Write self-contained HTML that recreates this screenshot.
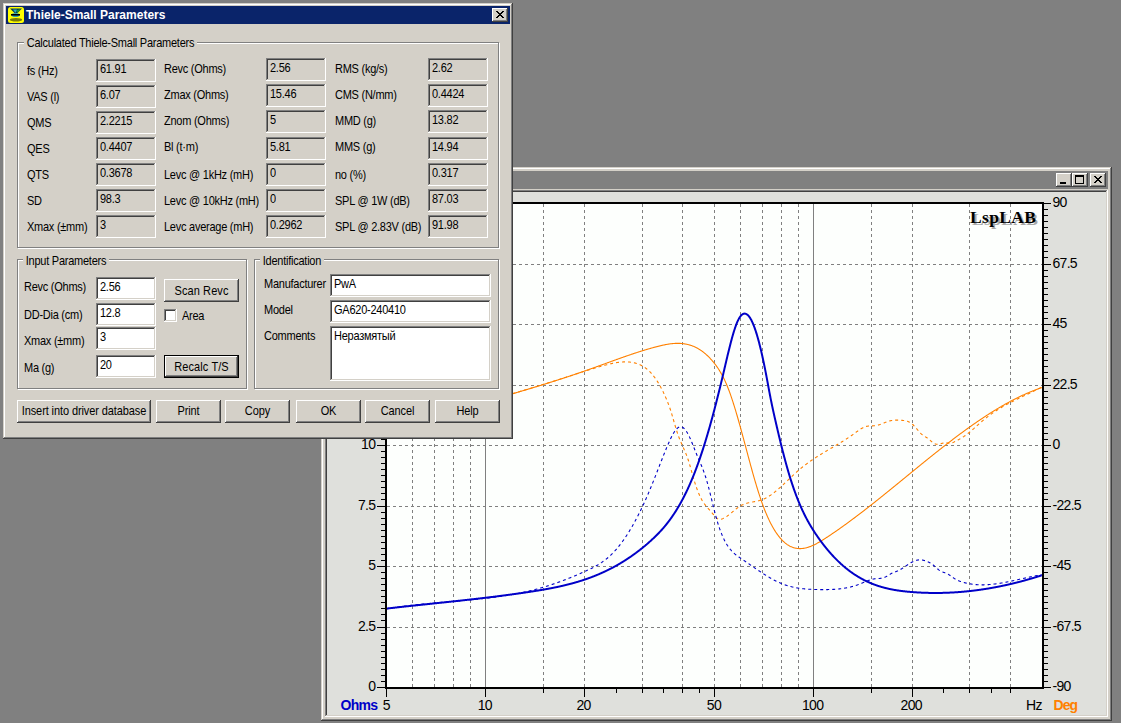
<!DOCTYPE html>
<html><head><meta charset="utf-8"><style>
html,body{margin:0;padding:0}
body{width:1121px;height:723px;position:relative;overflow:hidden;background:#808080;font-family:"Liberation Sans",sans-serif;font-size:11px}
.t{position:absolute;white-space:nowrap;font-size:11px;line-height:13px;color:#000;letter-spacing:-0.25px;transform:scaleY(1.12);transform-origin:0 0}
</style></head><body>
<svg width="1121" height="723" style="position:absolute;left:0;top:0" shape-rendering="crispEdges"><rect x="321" y="167" width="791" height="554" fill="#d4d0c8"/><rect x="321" y="167" width="790" height="1" fill="#d4d0c8"/><rect x="321" y="167" width="1" height="553" fill="#d4d0c8"/><rect x="322" y="168" width="788" height="1" fill="#ffffff"/><rect x="322" y="168" width="1" height="551" fill="#ffffff"/><rect x="321" y="720" width="791" height="1" fill="#404040"/><rect x="1111" y="167" width="1" height="554" fill="#404040"/><rect x="322" y="719" width="789" height="1" fill="#808080"/><rect x="1110" y="168" width="1" height="552" fill="#808080"/><rect x="325" y="171" width="783" height="18" fill="#808080"/><rect x="1056" y="173" width="16" height="14" fill="#d4d0c8"/><rect x="1056" y="173" width="15" height="1" fill="#ffffff"/><rect x="1056" y="173" width="1" height="13" fill="#ffffff"/><rect x="1057" y="174" width="13" height="1" fill="#d4d0c8"/><rect x="1057" y="174" width="1" height="11" fill="#d4d0c8"/><rect x="1056" y="186" width="16" height="1" fill="#404040"/><rect x="1071" y="173" width="1" height="14" fill="#404040"/><rect x="1057" y="185" width="14" height="1" fill="#808080"/><rect x="1070" y="174" width="1" height="12" fill="#808080"/><rect x="1072" y="173" width="16" height="14" fill="#d4d0c8"/><rect x="1072" y="173" width="15" height="1" fill="#ffffff"/><rect x="1072" y="173" width="1" height="13" fill="#ffffff"/><rect x="1073" y="174" width="13" height="1" fill="#d4d0c8"/><rect x="1073" y="174" width="1" height="11" fill="#d4d0c8"/><rect x="1072" y="186" width="16" height="1" fill="#404040"/><rect x="1087" y="173" width="1" height="14" fill="#404040"/><rect x="1073" y="185" width="14" height="1" fill="#808080"/><rect x="1086" y="174" width="1" height="12" fill="#808080"/><rect x="1090" y="173" width="16" height="14" fill="#d4d0c8"/><rect x="1090" y="173" width="15" height="1" fill="#ffffff"/><rect x="1090" y="173" width="1" height="13" fill="#ffffff"/><rect x="1091" y="174" width="13" height="1" fill="#d4d0c8"/><rect x="1091" y="174" width="1" height="11" fill="#d4d0c8"/><rect x="1090" y="186" width="16" height="1" fill="#404040"/><rect x="1105" y="173" width="1" height="14" fill="#404040"/><rect x="1091" y="185" width="14" height="1" fill="#808080"/><rect x="1104" y="174" width="1" height="12" fill="#808080"/><rect x="1060" y="182" width="6" height="2" fill="#000"/><rect x="1075" y="175" width="9" height="2" fill="#000"/><rect x="1075" y="175" width="1" height="9" fill="#000"/><rect x="1083" y="175" width="1" height="9" fill="#000"/><rect x="1075" y="183" width="9" height="1" fill="#000"/><rect x="1094" y="176" width="1" height="1" fill="#000"/><rect x="1095" y="176" width="1" height="1" fill="#000"/><rect x="1100" y="176" width="1" height="1" fill="#000"/><rect x="1101" y="176" width="1" height="1" fill="#000"/><rect x="1095" y="177" width="1" height="1" fill="#000"/><rect x="1096" y="177" width="1" height="1" fill="#000"/><rect x="1099" y="177" width="1" height="1" fill="#000"/><rect x="1100" y="177" width="1" height="1" fill="#000"/><rect x="1096" y="178" width="1" height="1" fill="#000"/><rect x="1097" y="178" width="1" height="1" fill="#000"/><rect x="1098" y="178" width="1" height="1" fill="#000"/><rect x="1099" y="178" width="1" height="1" fill="#000"/><rect x="1097" y="179" width="1" height="1" fill="#000"/><rect x="1098" y="179" width="1" height="1" fill="#000"/><rect x="1096" y="180" width="1" height="1" fill="#000"/><rect x="1097" y="180" width="1" height="1" fill="#000"/><rect x="1098" y="180" width="1" height="1" fill="#000"/><rect x="1099" y="180" width="1" height="1" fill="#000"/><rect x="1095" y="181" width="1" height="1" fill="#000"/><rect x="1096" y="181" width="1" height="1" fill="#000"/><rect x="1099" y="181" width="1" height="1" fill="#000"/><rect x="1100" y="181" width="1" height="1" fill="#000"/><rect x="1094" y="182" width="1" height="1" fill="#000"/><rect x="1095" y="182" width="1" height="1" fill="#000"/><rect x="1100" y="182" width="1" height="1" fill="#000"/><rect x="1101" y="182" width="1" height="1" fill="#000"/><rect x="325" y="190" width="782" height="1" fill="#808080"/><rect x="325" y="190" width="1" height="526" fill="#808080"/><rect x="326" y="191" width="780" height="1" fill="#404040"/><rect x="326" y="191" width="1" height="524" fill="#404040"/><rect x="325" y="716" width="783" height="1" fill="#ffffff"/><rect x="1107" y="190" width="1" height="527" fill="#ffffff"/><rect x="326" y="715" width="781" height="1" fill="#d4d0c8"/><rect x="1106" y="191" width="1" height="525" fill="#d4d0c8"/><rect x="327" y="192" width="779" height="523" fill="#dfe0dc"/><rect x="385" y="202" width="659" height="487" fill="#000"/><rect x="387" y="204" width="655" height="483" fill="#fdfffd"/><g stroke="#808080" stroke-width="1" stroke-dasharray="3 3" shape-rendering="crispEdges"><line x1="387" y1="627.5" x2="1042" y2="627.5"/><line x1="387" y1="566.5" x2="1042" y2="566.5"/><line x1="387" y1="506.5" x2="1042" y2="506.5"/><line x1="387" y1="445.5" x2="1042" y2="445.5"/><line x1="387" y1="385.5" x2="1042" y2="385.5"/><line x1="387" y1="324.5" x2="1042" y2="324.5"/><line x1="387" y1="264.5" x2="1042" y2="264.5"/><line x1="412.5" y1="204" x2="412.5" y2="687"/><line x1="434.5" y1="204" x2="434.5" y2="687"/><line x1="453.5" y1="204" x2="453.5" y2="687"/><line x1="470.5" y1="204" x2="470.5" y2="687"/><line x1="543.5" y1="204" x2="543.5" y2="687"/><line x1="584.5" y1="204" x2="584.5" y2="687"/><line x1="642.5" y1="204" x2="642.5" y2="687"/><line x1="682.5" y1="204" x2="682.5" y2="687"/><line x1="714.5" y1="204" x2="714.5" y2="687"/><line x1="740.5" y1="204" x2="740.5" y2="687"/><line x1="762.5" y1="204" x2="762.5" y2="687"/><line x1="781.5" y1="204" x2="781.5" y2="687"/><line x1="798.5" y1="204" x2="798.5" y2="687"/><line x1="871.5" y1="204" x2="871.5" y2="687"/><line x1="912.5" y1="204" x2="912.5" y2="687"/><line x1="969.5" y1="204" x2="969.5" y2="687"/><line x1="1010.5" y1="204" x2="1010.5" y2="687"/></g><rect x="485" y="204" width="1" height="483" fill="#808080"/><rect x="813" y="204" width="1" height="483" fill="#808080"/><rect x="377" y="687" width="8" height="1" fill="#000"/><rect x="1044" y="687" width="7" height="1" fill="#000"/><rect x="381" y="681" width="4" height="1" fill="#000"/><rect x="1044" y="681" width="4" height="1" fill="#000"/><rect x="381" y="675" width="4" height="1" fill="#000"/><rect x="1044" y="675" width="4" height="1" fill="#000"/><rect x="381" y="669" width="4" height="1" fill="#000"/><rect x="1044" y="669" width="4" height="1" fill="#000"/><rect x="381" y="663" width="4" height="1" fill="#000"/><rect x="1044" y="663" width="4" height="1" fill="#000"/><rect x="381" y="657" width="4" height="1" fill="#000"/><rect x="1044" y="657" width="4" height="1" fill="#000"/><rect x="381" y="651" width="4" height="1" fill="#000"/><rect x="1044" y="651" width="4" height="1" fill="#000"/><rect x="381" y="645" width="4" height="1" fill="#000"/><rect x="1044" y="645" width="4" height="1" fill="#000"/><rect x="381" y="639" width="4" height="1" fill="#000"/><rect x="1044" y="639" width="4" height="1" fill="#000"/><rect x="381" y="633" width="4" height="1" fill="#000"/><rect x="1044" y="633" width="4" height="1" fill="#000"/><rect x="377" y="627" width="8" height="1" fill="#000"/><rect x="1044" y="627" width="7" height="1" fill="#000"/><rect x="381" y="620" width="4" height="1" fill="#000"/><rect x="1044" y="620" width="4" height="1" fill="#000"/><rect x="381" y="614" width="4" height="1" fill="#000"/><rect x="1044" y="614" width="4" height="1" fill="#000"/><rect x="381" y="608" width="4" height="1" fill="#000"/><rect x="1044" y="608" width="4" height="1" fill="#000"/><rect x="381" y="602" width="4" height="1" fill="#000"/><rect x="1044" y="602" width="4" height="1" fill="#000"/><rect x="381" y="596" width="4" height="1" fill="#000"/><rect x="1044" y="596" width="4" height="1" fill="#000"/><rect x="381" y="590" width="4" height="1" fill="#000"/><rect x="1044" y="590" width="4" height="1" fill="#000"/><rect x="381" y="584" width="4" height="1" fill="#000"/><rect x="1044" y="584" width="4" height="1" fill="#000"/><rect x="381" y="578" width="4" height="1" fill="#000"/><rect x="1044" y="578" width="4" height="1" fill="#000"/><rect x="381" y="572" width="4" height="1" fill="#000"/><rect x="1044" y="572" width="4" height="1" fill="#000"/><rect x="377" y="566" width="8" height="1" fill="#000"/><rect x="1044" y="566" width="7" height="1" fill="#000"/><rect x="381" y="560" width="4" height="1" fill="#000"/><rect x="1044" y="560" width="4" height="1" fill="#000"/><rect x="381" y="554" width="4" height="1" fill="#000"/><rect x="1044" y="554" width="4" height="1" fill="#000"/><rect x="381" y="548" width="4" height="1" fill="#000"/><rect x="1044" y="548" width="4" height="1" fill="#000"/><rect x="381" y="542" width="4" height="1" fill="#000"/><rect x="1044" y="542" width="4" height="1" fill="#000"/><rect x="381" y="536" width="4" height="1" fill="#000"/><rect x="1044" y="536" width="4" height="1" fill="#000"/><rect x="381" y="530" width="4" height="1" fill="#000"/><rect x="1044" y="530" width="4" height="1" fill="#000"/><rect x="381" y="524" width="4" height="1" fill="#000"/><rect x="1044" y="524" width="4" height="1" fill="#000"/><rect x="381" y="518" width="4" height="1" fill="#000"/><rect x="1044" y="518" width="4" height="1" fill="#000"/><rect x="381" y="512" width="4" height="1" fill="#000"/><rect x="1044" y="512" width="4" height="1" fill="#000"/><rect x="377" y="506" width="8" height="1" fill="#000"/><rect x="1044" y="506" width="7" height="1" fill="#000"/><rect x="381" y="499" width="4" height="1" fill="#000"/><rect x="1044" y="499" width="4" height="1" fill="#000"/><rect x="381" y="493" width="4" height="1" fill="#000"/><rect x="1044" y="493" width="4" height="1" fill="#000"/><rect x="381" y="487" width="4" height="1" fill="#000"/><rect x="1044" y="487" width="4" height="1" fill="#000"/><rect x="381" y="481" width="4" height="1" fill="#000"/><rect x="1044" y="481" width="4" height="1" fill="#000"/><rect x="381" y="475" width="4" height="1" fill="#000"/><rect x="1044" y="475" width="4" height="1" fill="#000"/><rect x="381" y="469" width="4" height="1" fill="#000"/><rect x="1044" y="469" width="4" height="1" fill="#000"/><rect x="381" y="463" width="4" height="1" fill="#000"/><rect x="1044" y="463" width="4" height="1" fill="#000"/><rect x="381" y="457" width="4" height="1" fill="#000"/><rect x="1044" y="457" width="4" height="1" fill="#000"/><rect x="381" y="451" width="4" height="1" fill="#000"/><rect x="1044" y="451" width="4" height="1" fill="#000"/><rect x="377" y="445" width="8" height="1" fill="#000"/><rect x="1044" y="445" width="7" height="1" fill="#000"/><rect x="381" y="439" width="4" height="1" fill="#000"/><rect x="1044" y="439" width="4" height="1" fill="#000"/><rect x="381" y="433" width="4" height="1" fill="#000"/><rect x="1044" y="433" width="4" height="1" fill="#000"/><rect x="381" y="427" width="4" height="1" fill="#000"/><rect x="1044" y="427" width="4" height="1" fill="#000"/><rect x="381" y="421" width="4" height="1" fill="#000"/><rect x="1044" y="421" width="4" height="1" fill="#000"/><rect x="381" y="415" width="4" height="1" fill="#000"/><rect x="1044" y="415" width="4" height="1" fill="#000"/><rect x="381" y="409" width="4" height="1" fill="#000"/><rect x="1044" y="409" width="4" height="1" fill="#000"/><rect x="381" y="403" width="4" height="1" fill="#000"/><rect x="1044" y="403" width="4" height="1" fill="#000"/><rect x="381" y="397" width="4" height="1" fill="#000"/><rect x="1044" y="397" width="4" height="1" fill="#000"/><rect x="381" y="391" width="4" height="1" fill="#000"/><rect x="1044" y="391" width="4" height="1" fill="#000"/><rect x="377" y="385" width="8" height="1" fill="#000"/><rect x="1044" y="385" width="7" height="1" fill="#000"/><rect x="381" y="378" width="4" height="1" fill="#000"/><rect x="1044" y="378" width="4" height="1" fill="#000"/><rect x="381" y="372" width="4" height="1" fill="#000"/><rect x="1044" y="372" width="4" height="1" fill="#000"/><rect x="381" y="366" width="4" height="1" fill="#000"/><rect x="1044" y="366" width="4" height="1" fill="#000"/><rect x="381" y="360" width="4" height="1" fill="#000"/><rect x="1044" y="360" width="4" height="1" fill="#000"/><rect x="381" y="354" width="4" height="1" fill="#000"/><rect x="1044" y="354" width="4" height="1" fill="#000"/><rect x="381" y="348" width="4" height="1" fill="#000"/><rect x="1044" y="348" width="4" height="1" fill="#000"/><rect x="381" y="342" width="4" height="1" fill="#000"/><rect x="1044" y="342" width="4" height="1" fill="#000"/><rect x="381" y="336" width="4" height="1" fill="#000"/><rect x="1044" y="336" width="4" height="1" fill="#000"/><rect x="381" y="330" width="4" height="1" fill="#000"/><rect x="1044" y="330" width="4" height="1" fill="#000"/><rect x="377" y="324" width="8" height="1" fill="#000"/><rect x="1044" y="324" width="7" height="1" fill="#000"/><rect x="381" y="318" width="4" height="1" fill="#000"/><rect x="1044" y="318" width="4" height="1" fill="#000"/><rect x="381" y="312" width="4" height="1" fill="#000"/><rect x="1044" y="312" width="4" height="1" fill="#000"/><rect x="381" y="306" width="4" height="1" fill="#000"/><rect x="1044" y="306" width="4" height="1" fill="#000"/><rect x="381" y="300" width="4" height="1" fill="#000"/><rect x="1044" y="300" width="4" height="1" fill="#000"/><rect x="381" y="294" width="4" height="1" fill="#000"/><rect x="1044" y="294" width="4" height="1" fill="#000"/><rect x="381" y="288" width="4" height="1" fill="#000"/><rect x="1044" y="288" width="4" height="1" fill="#000"/><rect x="381" y="282" width="4" height="1" fill="#000"/><rect x="1044" y="282" width="4" height="1" fill="#000"/><rect x="381" y="276" width="4" height="1" fill="#000"/><rect x="1044" y="276" width="4" height="1" fill="#000"/><rect x="381" y="270" width="4" height="1" fill="#000"/><rect x="1044" y="270" width="4" height="1" fill="#000"/><rect x="377" y="264" width="8" height="1" fill="#000"/><rect x="1044" y="264" width="7" height="1" fill="#000"/><rect x="381" y="257" width="4" height="1" fill="#000"/><rect x="1044" y="257" width="4" height="1" fill="#000"/><rect x="381" y="251" width="4" height="1" fill="#000"/><rect x="1044" y="251" width="4" height="1" fill="#000"/><rect x="381" y="245" width="4" height="1" fill="#000"/><rect x="1044" y="245" width="4" height="1" fill="#000"/><rect x="381" y="239" width="4" height="1" fill="#000"/><rect x="1044" y="239" width="4" height="1" fill="#000"/><rect x="381" y="233" width="4" height="1" fill="#000"/><rect x="1044" y="233" width="4" height="1" fill="#000"/><rect x="381" y="227" width="4" height="1" fill="#000"/><rect x="1044" y="227" width="4" height="1" fill="#000"/><rect x="381" y="221" width="4" height="1" fill="#000"/><rect x="1044" y="221" width="4" height="1" fill="#000"/><rect x="381" y="215" width="4" height="1" fill="#000"/><rect x="1044" y="215" width="4" height="1" fill="#000"/><rect x="381" y="209" width="4" height="1" fill="#000"/><rect x="1044" y="209" width="4" height="1" fill="#000"/><rect x="377" y="203" width="8" height="1" fill="#000"/><rect x="1044" y="203" width="7" height="1" fill="#000"/><rect x="386" y="689" width="1" height="8" fill="#000"/><rect x="485" y="689" width="1" height="8" fill="#000"/><rect x="584" y="689" width="1" height="8" fill="#000"/><rect x="714" y="689" width="1" height="8" fill="#000"/><rect x="813" y="689" width="1" height="8" fill="#000"/><rect x="912" y="689" width="1" height="8" fill="#000"/><rect x="543" y="689" width="1" height="4" fill="#000"/><rect x="616" y="689" width="1" height="4" fill="#000"/><rect x="642" y="689" width="1" height="4" fill="#000"/><rect x="663" y="689" width="1" height="4" fill="#000"/><rect x="682" y="689" width="1" height="4" fill="#000"/><rect x="699" y="689" width="1" height="4" fill="#000"/><rect x="871" y="689" width="1" height="4" fill="#000"/><rect x="943" y="689" width="1" height="4" fill="#000"/><rect x="969" y="689" width="1" height="4" fill="#000"/><rect x="991" y="689" width="1" height="4" fill="#000"/><rect x="1010" y="689" width="1" height="4" fill="#000"/><text x="375.3" y="691" text-anchor="end" font-family="Liberation Sans" font-size="14" letter-spacing="-0.7">0</text><text x="1052.5" y="691" font-family="Liberation Sans" font-size="14" letter-spacing="-0.7">-90</text><text x="375.3" y="631" text-anchor="end" font-family="Liberation Sans" font-size="14" letter-spacing="-0.7">2.5</text><text x="1052.5" y="631" font-family="Liberation Sans" font-size="14" letter-spacing="-0.7">-67.5</text><text x="375.3" y="570" text-anchor="end" font-family="Liberation Sans" font-size="14" letter-spacing="-0.7">5</text><text x="1052.5" y="570" font-family="Liberation Sans" font-size="14" letter-spacing="-0.7">-45</text><text x="375.3" y="510" text-anchor="end" font-family="Liberation Sans" font-size="14" letter-spacing="-0.7">7.5</text><text x="1052.5" y="510" font-family="Liberation Sans" font-size="14" letter-spacing="-0.7">-22.5</text><text x="375.3" y="449" text-anchor="end" font-family="Liberation Sans" font-size="14" letter-spacing="-0.7">10</text><text x="1052.5" y="449" font-family="Liberation Sans" font-size="14" letter-spacing="-0.7">0</text><text x="375.3" y="389" text-anchor="end" font-family="Liberation Sans" font-size="14" letter-spacing="-0.7">12.5</text><text x="1052.5" y="389" font-family="Liberation Sans" font-size="14" letter-spacing="-0.7">22.5</text><text x="375.3" y="328" text-anchor="end" font-family="Liberation Sans" font-size="14" letter-spacing="-0.7">15</text><text x="1052.5" y="328" font-family="Liberation Sans" font-size="14" letter-spacing="-0.7">45</text><text x="375.3" y="268" text-anchor="end" font-family="Liberation Sans" font-size="14" letter-spacing="-0.7">17.5</text><text x="1052.5" y="268" font-family="Liberation Sans" font-size="14" letter-spacing="-0.7">67.5</text><text x="375.3" y="207" text-anchor="end" font-family="Liberation Sans" font-size="14" letter-spacing="-0.7">20</text><text x="1052.5" y="207" font-family="Liberation Sans" font-size="14" letter-spacing="-0.7">90</text><text x="386.2" y="710" text-anchor="middle" font-family="Liberation Sans" font-size="14" letter-spacing="-0.7">5</text><text x="484.8" y="710" text-anchor="middle" font-family="Liberation Sans" font-size="14" letter-spacing="-0.7">10</text><text x="583.5" y="710" text-anchor="middle" font-family="Liberation Sans" font-size="14" letter-spacing="-0.7">20</text><text x="713.9" y="710" text-anchor="middle" font-family="Liberation Sans" font-size="14" letter-spacing="-0.7">50</text><text x="812.6" y="710" text-anchor="middle" font-family="Liberation Sans" font-size="14" letter-spacing="-0.7">100</text><text x="911.2" y="710" text-anchor="middle" font-family="Liberation Sans" font-size="14" letter-spacing="-0.7">200</text><text x="1026" y="710" font-family="Liberation Sans" font-size="14" letter-spacing="-0.7">Hz</text><text x="340.5" y="710" font-family="Liberation Sans" font-size="14" font-weight="bold" letter-spacing="-0.75" fill="#0000c8">Ohms</text><text x="1053.5" y="710" font-family="Liberation Sans" font-size="14" font-weight="bold" letter-spacing="-0.9" fill="#ff8000">Deg</text><defs><clipPath id="pc"><rect x="387" y="204" width="655" height="483"/></clipPath></defs><g clip-path="url(#pc)" fill="none" shape-rendering="auto"><path d="M386.00,431.04 L386.50,430.88 L387.00,430.72 L387.50,430.57 L388.00,430.41 L388.50,430.25 L389.00,430.09 L389.50,429.94 L390.00,429.78 L390.50,429.62 L391.00,429.47 L391.50,429.31 L392.00,429.16 L392.50,429.00 L393.00,428.84 L393.50,428.69 L394.00,428.53 L394.50,428.38 L395.00,428.22 L395.50,428.07 L396.00,427.91 L396.50,427.76 L397.00,427.60 L397.50,427.45 L398.00,427.29 L398.50,427.14 L399.00,426.99 L399.50,426.83 L400.00,426.68 L400.50,426.52 L401.00,426.37 L401.50,426.22 L402.00,426.06 L402.50,425.91 L403.00,425.76 L403.50,425.60 L404.00,425.45 L404.50,425.30 L405.00,425.15 L405.50,424.99 L406.00,424.84 L406.50,424.69 L407.00,424.54 L407.50,424.39 L408.00,424.23 L408.50,424.08 L409.00,423.93 L409.50,423.78 L410.00,423.63 L410.50,423.48 L411.00,423.33 L411.50,423.17 L412.00,423.02 L412.50,422.87 L413.00,422.72 L413.50,422.57 L414.00,422.42 L414.50,422.27 L415.00,422.12 L415.50,421.97 L416.00,421.82 L416.50,421.67 L417.00,421.52 L417.50,421.37 L418.00,421.22 L418.50,421.07 L419.00,420.92 L419.50,420.77 L420.00,420.62 L420.50,420.47 L421.00,420.33 L421.50,420.18 L422.00,420.03 L422.50,419.88 L423.00,419.73 L423.50,419.58 L424.00,419.43 L424.50,419.28 L425.00,419.14 L425.50,418.99 L426.00,418.84 L426.50,418.69 L427.00,418.54 L427.50,418.40 L428.00,418.25 L428.50,418.10 L429.00,417.95 L429.50,417.80 L430.00,417.66 L430.50,417.51 L431.00,417.36 L431.50,417.22 L432.00,417.07 L432.50,416.92 L433.00,416.77 L433.50,416.63 L434.00,416.48 L434.50,416.33 L435.00,416.19 L435.50,416.04 L436.00,415.89 L436.50,415.75 L437.00,415.60 L437.50,415.45 L438.00,415.31 L438.50,415.16 L439.00,415.01 L439.50,414.87 L440.00,414.72 L440.50,414.58 L441.00,414.43 L441.50,414.28 L442.00,414.14 L442.50,413.99 L443.00,413.85 L443.50,413.70 L444.00,413.55 L444.50,413.41 L445.00,413.26 L445.50,413.12 L446.00,412.97 L446.50,412.83 L447.00,412.68 L447.50,412.54 L448.00,412.39 L448.50,412.24 L449.00,412.10 L449.50,411.95 L450.00,411.81 L450.50,411.66 L451.00,411.52 L451.50,411.37 L452.00,411.23 L452.50,411.08 L453.00,410.94 L453.50,410.79 L454.00,410.65 L454.50,410.50 L455.00,410.36 L455.50,410.21 L456.00,410.07 L456.50,409.93 L457.00,409.78 L457.50,409.64 L458.00,409.49 L458.50,409.35 L459.00,409.20 L459.50,409.06 L460.00,408.91 L460.50,408.77 L461.00,408.62 L461.50,408.48 L462.00,408.33 L462.50,408.19 L463.00,408.05 L463.50,407.90 L464.00,407.76 L464.50,407.61 L465.00,407.47 L465.50,407.32 L466.00,407.18 L466.50,407.03 L467.00,406.89 L467.50,406.75 L468.00,406.60 L468.50,406.46 L469.00,406.31 L469.50,406.17 L470.00,406.02 L470.50,405.88 L471.00,405.74 L471.50,405.59 L472.00,405.45 L472.50,405.30 L473.00,405.16 L473.50,405.01 L474.00,404.87 L474.50,404.73 L475.00,404.58 L475.50,404.44 L476.00,404.29 L476.50,404.15 L477.00,404.00 L477.50,403.86 L478.00,403.72 L478.50,403.57 L479.00,403.43 L479.50,403.28 L480.00,403.14 L480.50,402.99 L481.00,402.85 L481.50,402.70 L482.00,402.56 L482.50,402.41 L483.00,402.27 L483.50,402.13 L484.00,401.98 L484.50,401.84 L485.00,401.69 L485.50,401.55 L486.00,401.40 L486.50,401.26 L487.00,401.11 L487.50,400.97 L488.00,400.82 L488.50,400.68 L489.00,400.53 L489.50,400.39 L490.00,400.24 L490.50,400.10 L491.00,399.95 L491.50,399.81 L492.00,399.66 L492.50,399.52 L493.00,399.37 L493.50,399.23 L494.00,399.08 L494.50,398.94 L495.00,398.79 L495.50,398.65 L496.00,398.50 L496.50,398.36 L497.00,398.21 L497.50,398.06 L498.00,397.92 L498.50,397.77 L499.00,397.63 L499.50,397.48 L500.00,397.34 L500.50,397.19 L501.00,397.04 L501.50,396.90 L502.00,396.75 L502.50,396.61 L503.00,396.46 L503.50,396.31 L504.00,396.17 L504.50,396.02 L505.00,395.88 L505.50,395.73 L506.00,395.58 L506.50,395.44 L507.00,395.29 L507.50,395.14 L508.00,395.00 L508.50,394.85 L509.00,394.70 L509.50,394.55 L510.00,394.41 L510.50,394.26 L511.00,394.11 L511.50,393.97 L512.00,393.82 L512.50,393.67 L513.00,393.52 L513.50,393.38 L514.00,393.23 L514.50,393.08 L515.00,392.93 L515.50,392.78 L516.00,392.64 L516.50,392.49 L517.00,392.34 L517.50,392.19 L518.00,392.04 L518.50,391.90 L519.00,391.75 L519.50,391.60 L520.00,391.45 L520.50,391.30 L521.00,391.15 L521.50,391.00 L522.00,390.85 L522.50,390.71 L523.00,390.56 L523.50,390.41 L524.00,390.26 L524.50,390.11 L525.00,389.96 L525.50,389.81 L526.00,389.66 L526.50,389.51 L527.00,389.36 L527.50,389.21 L528.00,389.06 L528.50,388.91 L529.00,388.76 L529.50,388.61 L530.00,388.46 L530.50,388.31 L531.00,388.15 L531.50,388.00 L532.00,387.85 L532.50,387.70 L533.00,387.55 L533.50,387.40 L534.00,387.25 L534.50,387.10 L535.00,386.94 L535.50,386.79 L536.00,386.64 L536.50,386.49 L537.00,386.34 L537.50,386.18 L538.00,386.03 L538.50,385.88 L539.00,385.72 L539.50,385.57 L540.00,385.42 L540.50,385.27 L541.00,385.11 L541.50,384.96 L542.00,384.81 L542.50,384.65 L543.00,384.50 L543.50,384.34 L544.00,384.19 L544.50,384.04 L545.00,383.88 L545.50,383.73 L546.00,383.57 L546.50,383.42 L547.00,383.26 L547.50,383.11 L548.00,382.95 L548.50,382.80 L549.00,382.64 L549.50,382.49 L550.00,382.33 L550.50,382.17 L551.00,382.02 L551.50,381.86 L552.00,381.71 L552.50,381.55 L553.00,381.39 L553.50,381.24 L554.00,381.08 L554.50,380.92 L555.00,380.76 L555.50,380.61 L556.00,380.45 L556.50,380.29 L557.00,380.13 L557.50,379.98 L558.00,379.82 L558.50,379.66 L559.00,379.50 L559.50,379.34 L560.00,379.18 L560.50,379.02 L561.00,378.87 L561.50,378.71 L562.00,378.55 L562.50,378.39 L563.00,378.23 L563.50,378.07 L564.00,377.91 L564.50,377.75 L565.00,377.59 L565.50,377.43 L566.00,377.26 L566.50,377.10 L567.00,376.94 L567.50,376.78 L568.00,376.62 L568.50,376.46 L569.00,376.30 L569.50,376.13 L570.00,375.97 L570.50,375.81 L571.00,375.65 L571.50,375.48 L572.00,375.32 L572.50,375.16 L573.00,374.99 L573.50,374.83 L574.00,374.67 L574.50,374.50 L575.00,374.34 L575.50,374.18 L576.00,374.01 L576.50,373.85 L577.00,373.69 L577.50,373.52 L578.00,373.36 L578.50,373.20 L579.00,373.04 L579.50,372.87 L580.00,372.71 L580.50,372.55 L581.00,372.39 L581.50,372.22 L582.00,372.06 L582.50,371.90 L583.00,371.74 L583.50,371.58 L584.00,371.42 L584.50,371.26 L585.00,371.10 L585.50,370.94 L586.00,370.78 L586.50,370.62 L587.00,370.46 L587.50,370.30 L588.00,370.14 L588.50,369.99 L589.00,369.83 L589.50,369.67 L590.00,369.52 L590.50,369.36 L591.00,369.21 L591.50,369.06 L592.00,368.90 L592.50,368.75 L593.00,368.60 L593.50,368.45 L594.00,368.29 L594.50,368.14 L595.00,368.00 L595.50,367.85 L596.00,367.70 L596.50,367.55 L597.00,367.40 L597.50,367.26 L598.00,367.11 L598.50,366.97 L599.00,366.83 L599.50,366.68 L600.00,366.54 L600.50,366.40 L601.00,366.26 L601.50,366.12 L602.00,365.99 L602.50,365.85 L603.00,365.71 L603.50,365.58 L604.00,365.44 L604.50,365.31 L605.00,365.18 L605.50,365.05 L606.00,364.92 L606.50,364.79 L607.00,364.66 L607.50,364.54 L608.00,364.41 L608.50,364.29 L609.00,364.17 L609.50,364.05 L610.00,363.93 L610.50,363.82 L611.00,363.70 L611.50,363.59 L612.00,363.48 L612.50,363.38 L613.00,363.27 L613.50,363.17 L614.00,363.08 L614.50,362.98 L615.00,362.89 L615.50,362.80 L616.00,362.72 L616.50,362.63 L617.00,362.56 L617.50,362.48 L618.00,362.41 L618.50,362.34 L619.00,362.28 L619.50,362.22 L620.00,362.16 L620.50,362.11 L621.00,362.07 L621.50,362.03 L622.00,361.99 L622.50,361.96 L623.00,361.93 L623.50,361.91 L624.00,361.89 L624.50,361.88 L625.00,361.87 L625.50,361.87 L626.00,361.87 L626.50,361.88 L627.00,361.90 L627.50,361.92 L628.00,361.95 L628.50,361.98 L629.00,362.02 L629.50,362.06 L630.00,362.12 L630.50,362.18 L631.00,362.24 L631.50,362.31 L632.00,362.39 L632.50,362.48 L633.00,362.57 L633.50,362.67 L634.00,362.78 L634.50,362.90 L635.00,363.02 L635.50,363.15 L636.00,363.29 L636.50,363.44 L637.00,363.60 L637.50,363.77 L638.00,363.95 L638.50,364.13 L639.00,364.33 L639.50,364.54 L640.00,364.76 L640.50,364.99 L641.00,365.24 L641.50,365.49 L642.00,365.76 L642.50,366.04 L643.00,366.33 L643.50,366.63 L644.00,366.95 L644.50,367.28 L645.00,367.63 L645.50,367.99 L646.00,368.36 L646.50,368.75 L647.00,369.16 L647.50,369.58 L648.00,370.01 L648.50,370.46 L649.00,370.93 L649.50,371.41 L650.00,371.91 L650.50,372.43 L651.00,372.97 L651.50,373.52 L652.00,374.09 L652.50,374.68 L653.00,375.28 L653.50,375.91 L654.00,376.55 L654.50,377.22 L655.00,377.90 L655.50,378.60 L656.00,379.32 L656.50,380.06 L657.00,380.82 L657.50,381.60 L658.00,382.41 L658.50,383.23 L659.00,384.07 L659.50,384.93 L660.00,385.82 L660.50,386.72 L661.00,387.65 L661.50,388.60 L662.00,389.57 L662.50,390.56 L663.00,391.58 L663.50,392.62 L664.00,393.68 L664.50,394.76 L665.00,395.87 L665.50,396.99 L666.00,398.15 L666.50,399.32 L667.00,400.53 L667.50,401.76 L668.00,403.02 L668.50,404.33 L669.00,405.67 L669.50,407.06 L670.00,408.49 L670.50,409.99 L671.00,411.53 L671.50,413.14 L672.00,414.81 L672.50,416.52 L673.00,418.26 L673.50,420.02 L674.00,421.78 L674.50,423.53 L675.00,425.25 L675.50,426.95 L676.00,428.61 L676.50,430.22 L677.00,431.79 L677.50,433.30 L678.00,434.76 L678.50,436.15 L679.00,437.48 L679.50,438.77 L680.00,440.01 L680.50,441.21 L681.00,442.38 L681.50,443.52 L682.00,444.65 L682.50,445.77 L683.00,446.88 L683.50,448.00 L684.00,449.13 L684.50,450.27 L685.00,451.43 L685.50,452.63 L686.00,453.85 L686.50,455.13 L687.00,456.45 L687.50,457.83 L688.00,459.27 L688.50,460.78 L689.00,462.37 L689.50,464.02 L690.00,465.72 L690.50,467.46 L691.00,469.23 L691.50,471.03 L692.00,472.82 L692.50,474.61 L693.00,476.39 L693.50,478.14 L694.00,479.84 L694.50,481.50 L695.00,483.10 L695.50,484.65 L696.00,486.15 L696.50,487.60 L697.00,488.99 L697.50,490.34 L698.00,491.63 L698.50,492.87 L699.00,494.06 L699.50,495.21 L700.00,496.30 L700.50,497.34 L701.00,498.32 L701.50,499.26 L702.00,500.16 L702.50,501.01 L703.00,501.81 L703.50,502.58 L704.00,503.32 L704.50,504.02 L705.00,504.69 L705.50,505.34 L706.00,505.97 L706.50,506.57 L707.00,507.16 L707.50,507.74 L708.00,508.30 L708.50,508.86 L709.00,509.41 L709.50,509.97 L710.00,510.52 L710.50,511.08 L711.00,511.64 L711.50,512.22 L712.00,512.81 L712.50,513.42 L713.00,514.03 L713.50,514.65 L714.00,515.26 L714.50,515.85 L715.00,516.42 L715.50,516.96 L716.00,517.46 L716.50,517.92 L717.00,518.32 L717.50,518.65 L718.00,518.92 L718.50,519.12 L719.00,519.25 L719.50,519.33 L720.00,519.34 L720.50,519.31 L721.00,519.24 L721.50,519.12 L722.00,518.96 L722.50,518.78 L723.00,518.56 L723.50,518.32 L724.00,518.07 L724.50,517.79 L725.00,517.51 L725.50,517.20 L726.00,516.88 L726.50,516.55 L727.00,516.21 L727.50,515.85 L728.00,515.48 L728.50,515.11 L729.00,514.73 L729.50,514.33 L730.00,513.94 L730.50,513.53 L731.00,513.13 L731.50,512.72 L732.00,512.31 L732.50,511.89 L733.00,511.48 L733.50,511.07 L734.00,510.65 L734.50,510.25 L735.00,509.84 L735.50,509.44 L736.00,509.05 L736.50,508.66 L737.00,508.28 L737.50,507.91 L738.00,507.54 L738.50,507.19 L739.00,506.85 L739.50,506.52 L740.00,506.21 L740.50,505.91 L741.00,505.63 L741.50,505.36 L742.00,505.11 L742.50,504.86 L743.00,504.64 L743.50,504.42 L744.00,504.22 L744.50,504.03 L745.00,503.85 L745.50,503.68 L746.00,503.52 L746.50,503.36 L747.00,503.22 L747.50,503.08 L748.00,502.96 L748.50,502.83 L749.00,502.72 L749.50,502.60 L750.00,502.50 L750.50,502.40 L751.00,502.30 L751.50,502.20 L752.00,502.11 L752.50,502.01 L753.00,501.92 L753.50,501.83 L754.00,501.74 L754.50,501.65 L755.00,501.55 L755.50,501.46 L756.00,501.36 L756.50,501.26 L757.00,501.15 L757.50,501.04 L758.00,500.93 L758.50,500.81 L759.00,500.68 L759.50,500.55 L760.00,500.40 L760.50,500.25 L761.00,500.10 L761.50,499.93 L762.00,499.75 L762.50,499.56 L763.00,499.36 L763.50,499.15 L764.00,498.93 L764.50,498.70 L765.00,498.46 L765.50,498.21 L766.00,497.95 L766.50,497.68 L767.00,497.40 L767.50,497.11 L768.00,496.82 L768.50,496.51 L769.00,496.20 L769.50,495.87 L770.00,495.54 L770.50,495.20 L771.00,494.86 L771.50,494.50 L772.00,494.14 L772.50,493.78 L773.00,493.40 L773.50,493.02 L774.00,492.63 L774.50,492.24 L775.00,491.84 L775.50,491.44 L776.00,491.03 L776.50,490.61 L777.00,490.19 L777.50,489.76 L778.00,489.33 L778.50,488.90 L779.00,488.46 L779.50,488.02 L780.00,487.57 L780.50,487.12 L781.00,486.67 L781.50,486.21 L782.00,485.76 L782.50,485.29 L783.00,484.83 L783.50,484.36 L784.00,483.89 L784.50,483.42 L785.00,482.95 L785.50,482.48 L786.00,482.00 L786.50,481.53 L787.00,481.05 L787.50,480.57 L788.00,480.10 L788.50,479.62 L789.00,479.14 L789.50,478.67 L790.00,478.19 L790.50,477.71 L791.00,477.24 L791.50,476.77 L792.00,476.29 L792.50,475.82 L793.00,475.35 L793.50,474.89 L794.00,474.42 L794.50,473.96 L795.00,473.50 L795.50,473.04 L796.00,472.59 L796.50,472.14 L797.00,471.69 L797.50,471.25 L798.00,470.81 L798.50,470.38 L799.00,469.94 L799.50,469.52 L800.00,469.10 L800.50,468.68 L801.00,468.26 L801.50,467.85 L802.00,467.45 L802.50,467.04 L803.00,466.64 L803.50,466.25 L804.00,465.86 L804.50,465.47 L805.00,465.09 L805.50,464.71 L806.00,464.33 L806.50,463.95 L807.00,463.58 L807.50,463.21 L808.00,462.85 L808.50,462.49 L809.00,462.13 L809.50,461.77 L810.00,461.42 L810.50,461.07 L811.00,460.72 L811.50,460.38 L812.00,460.04 L812.50,459.70 L813.00,459.36 L813.50,459.02 L814.00,458.69 L814.50,458.36 L815.00,458.03 L815.50,457.71 L816.00,457.38 L816.50,457.06 L817.00,456.74 L817.50,456.42 L818.00,456.11 L818.50,455.79 L819.00,455.48 L819.50,455.17 L820.00,454.86 L820.50,454.55 L821.00,454.24 L821.50,453.94 L822.00,453.63 L822.50,453.33 L823.00,453.03 L823.50,452.73 L824.00,452.43 L824.50,452.13 L825.00,451.83 L825.50,451.53 L826.00,451.24 L826.50,450.94 L827.00,450.64 L827.50,450.35 L828.00,450.06 L828.50,449.76 L829.00,449.47 L829.50,449.17 L830.00,448.88 L830.50,448.59 L831.00,448.30 L831.50,448.00 L832.00,447.71 L832.50,447.42 L833.00,447.12 L833.50,446.83 L834.00,446.54 L834.50,446.24 L835.00,445.95 L835.50,445.65 L836.00,445.36 L836.50,445.06 L837.00,444.76 L837.50,444.46 L838.00,444.17 L838.50,443.87 L839.00,443.57 L839.50,443.26 L840.00,442.96 L840.50,442.66 L841.00,442.35 L841.50,442.05 L842.00,441.74 L842.50,441.43 L843.00,441.12 L843.50,440.81 L844.00,440.49 L844.50,440.18 L845.00,439.86 L845.50,439.54 L846.00,439.22 L846.50,438.89 L847.00,438.57 L847.50,438.24 L848.00,437.91 L848.50,437.58 L849.00,437.25 L849.50,436.91 L850.00,436.57 L850.50,436.23 L851.00,435.89 L851.50,435.54 L852.00,435.19 L852.50,434.84 L853.00,434.48 L853.50,434.13 L854.00,433.76 L854.50,433.40 L855.00,433.03 L855.50,432.66 L856.00,432.29 L856.50,431.92 L857.00,431.55 L857.50,431.19 L858.00,430.82 L858.50,430.46 L859.00,430.11 L859.50,429.76 L860.00,429.43 L860.50,429.10 L861.00,428.78 L861.50,428.48 L862.00,428.18 L862.50,427.91 L863.00,427.65 L863.50,427.40 L864.00,427.17 L864.50,426.97 L865.00,426.78 L865.50,426.62 L866.00,426.48 L866.50,426.36 L867.00,426.26 L867.50,426.17 L868.00,426.10 L868.50,426.05 L869.00,426.00 L869.50,425.97 L870.00,425.94 L870.50,425.92 L871.00,425.90 L871.50,425.89 L872.00,425.88 L872.50,425.86 L873.00,425.84 L873.50,425.82 L874.00,425.79 L874.50,425.76 L875.00,425.71 L875.50,425.65 L876.00,425.57 L876.50,425.49 L877.00,425.38 L877.50,425.26 L878.00,425.13 L878.50,424.99 L879.00,424.84 L879.50,424.68 L880.00,424.50 L880.50,424.33 L881.00,424.14 L881.50,423.95 L882.00,423.75 L882.50,423.56 L883.00,423.35 L883.50,423.15 L884.00,422.95 L884.50,422.75 L885.00,422.55 L885.50,422.35 L886.00,422.16 L886.50,421.97 L887.00,421.78 L887.50,421.61 L888.00,421.44 L888.50,421.28 L889.00,421.13 L889.50,420.99 L890.00,420.87 L890.50,420.75 L891.00,420.65 L891.50,420.56 L892.00,420.47 L892.50,420.40 L893.00,420.34 L893.50,420.28 L894.00,420.23 L894.50,420.20 L895.00,420.17 L895.50,420.14 L896.00,420.13 L896.50,420.12 L897.00,420.12 L897.50,420.12 L898.00,420.13 L898.50,420.14 L899.00,420.16 L899.50,420.18 L900.00,420.21 L900.50,420.24 L901.00,420.28 L901.50,420.31 L902.00,420.35 L902.50,420.39 L903.00,420.44 L903.50,420.49 L904.00,420.55 L904.50,420.62 L905.00,420.69 L905.50,420.78 L906.00,420.89 L906.50,421.01 L907.00,421.15 L907.50,421.31 L908.00,421.48 L908.50,421.68 L909.00,421.91 L909.50,422.16 L910.00,422.44 L910.50,422.74 L911.00,423.08 L911.50,423.45 L912.00,423.85 L912.50,424.29 L913.00,424.76 L913.50,425.25 L914.00,425.77 L914.50,426.30 L915.00,426.85 L915.50,427.42 L916.00,427.99 L916.50,428.58 L917.00,429.16 L917.50,429.75 L918.00,430.33 L918.50,430.91 L919.00,431.48 L919.50,432.03 L920.00,432.57 L920.50,433.10 L921.00,433.59 L921.50,434.07 L922.00,434.51 L922.50,434.92 L923.00,435.30 L923.50,435.65 L924.00,435.98 L924.50,436.30 L925.00,436.60 L925.50,436.90 L926.00,437.20 L926.50,437.51 L927.00,437.83 L927.50,438.17 L928.00,438.53 L928.50,438.92 L929.00,439.33 L929.50,439.76 L930.00,440.19 L930.50,440.63 L931.00,441.07 L931.50,441.50 L932.00,441.92 L932.50,442.31 L933.00,442.69 L933.50,443.03 L934.00,443.35 L934.50,443.62 L935.00,443.84 L935.50,444.01 L936.00,444.14 L936.50,444.22 L937.00,444.27 L937.50,444.27 L938.00,444.25 L938.50,444.20 L939.00,444.12 L939.50,444.03 L940.00,443.92 L940.50,443.80 L941.00,443.67 L941.50,443.53 L942.00,443.40 L942.50,443.27 L943.00,443.15 L943.50,443.04 L944.00,442.95 L944.50,442.87 L945.00,442.82 L945.50,442.80 L946.00,442.81 L946.50,442.85 L947.00,442.91 L947.50,442.98 L948.00,443.05 L948.50,443.12 L949.00,443.18 L949.50,443.23 L950.00,443.25 L950.50,443.23 L951.00,443.18 L951.50,443.09 L952.00,442.95 L952.50,442.78 L953.00,442.57 L953.50,442.34 L954.00,442.09 L954.50,441.82 L955.00,441.54 L955.50,441.26 L956.00,440.98 L956.50,440.70 L957.00,440.43 L957.50,440.17 L958.00,439.91 L958.50,439.65 L959.00,439.39 L959.50,439.12 L960.00,438.86 L960.50,438.58 L961.00,438.30 L961.50,438.01 L962.00,437.71 L962.50,437.40 L963.00,437.08 L963.50,436.75 L964.00,436.42 L964.50,436.07 L965.00,435.72 L965.50,435.36 L966.00,434.99 L966.50,434.61 L967.00,434.23 L967.50,433.84 L968.00,433.45 L968.50,433.05 L969.00,432.64 L969.50,432.23 L970.00,431.82 L970.50,431.40 L971.00,430.97 L971.50,430.55 L972.00,430.12 L972.50,429.68 L973.00,429.24 L973.50,428.81 L974.00,428.36 L974.50,427.92 L975.00,427.48 L975.50,427.03 L976.00,426.59 L976.50,426.14 L977.00,425.69 L977.50,425.25 L978.00,424.80 L978.50,424.35 L979.00,423.91 L979.50,423.47 L980.00,423.03 L980.50,422.59 L981.00,422.15 L981.50,421.72 L982.00,421.29 L982.50,420.86 L983.00,420.44 L983.50,420.02 L984.00,419.60 L984.50,419.19 L985.00,418.79 L985.50,418.38 L986.00,417.99 L986.50,417.59 L987.00,417.20 L987.50,416.82 L988.00,416.43 L988.50,416.06 L989.00,415.68 L989.50,415.31 L990.00,414.95 L990.50,414.58 L991.00,414.22 L991.50,413.87 L992.00,413.52 L992.50,413.17 L993.00,412.82 L993.50,412.48 L994.00,412.14 L994.50,411.81 L995.00,411.48 L995.50,411.15 L996.00,410.82 L996.50,410.50 L997.00,410.18 L997.50,409.86 L998.00,409.55 L998.50,409.24 L999.00,408.93 L999.50,408.62 L1000.00,408.32 L1000.50,408.02 L1001.00,407.72 L1001.50,407.42 L1002.00,407.13 L1002.50,406.84 L1003.00,406.55 L1003.50,406.27 L1004.00,405.98 L1004.50,405.70 L1005.00,405.42 L1005.50,405.14 L1006.00,404.87 L1006.50,404.60 L1007.00,404.32 L1007.50,404.05 L1008.00,403.79 L1008.50,403.52 L1009.00,403.26 L1009.50,402.99 L1010.00,402.73 L1010.50,402.47 L1011.00,402.21 L1011.50,401.96 L1012.00,401.70 L1012.50,401.45 L1013.00,401.19 L1013.50,400.94 L1014.00,400.69 L1014.50,400.44 L1015.00,400.19 L1015.50,399.95 L1016.00,399.70 L1016.50,399.45 L1017.00,399.21 L1017.50,398.96 L1018.00,398.72 L1018.50,398.48 L1019.00,398.24 L1019.50,397.99 L1020.00,397.75 L1020.50,397.51 L1021.00,397.27 L1021.50,397.03 L1022.00,396.79 L1022.50,396.55 L1023.00,396.31 L1023.50,396.07 L1024.00,395.83 L1024.50,395.60 L1025.00,395.36 L1025.50,395.12 L1026.00,394.88 L1026.50,394.64 L1027.00,394.40 L1027.50,394.16 L1028.00,393.92 L1028.50,393.68 L1029.00,393.43 L1029.50,393.19 L1030.00,392.95 L1030.50,392.71 L1031.00,392.46 L1031.50,392.22 L1032.00,391.97 L1032.50,391.72 L1033.00,391.48 L1033.50,391.23 L1034.00,390.98 L1034.50,390.73 L1035.00,390.48 L1035.50,390.22 L1036.00,389.97 L1036.50,389.71 L1037.00,389.46 L1037.50,389.20 L1038.00,388.94 L1038.50,388.68 L1039.00,388.41 L1039.50,388.15 L1040.00,387.88 L1040.50,387.62 L1041.00,387.35 L1041.50,387.08 L1042.00,386.80" stroke="#ff8000" stroke-width="1.1" stroke-dasharray="3 3"/><path d="M386.00,431.07 L386.50,430.90 L387.00,430.74 L387.50,430.58 L388.00,430.42 L388.50,430.26 L389.00,430.10 L389.50,429.94 L390.00,429.77 L390.50,429.61 L391.00,429.45 L391.50,429.29 L392.00,429.13 L392.50,428.97 L393.00,428.82 L393.50,428.66 L394.00,428.50 L394.50,428.34 L395.00,428.18 L395.50,428.02 L396.00,427.86 L396.50,427.71 L397.00,427.55 L397.50,427.39 L398.00,427.23 L398.50,427.08 L399.00,426.92 L399.50,426.76 L400.00,426.61 L400.50,426.45 L401.00,426.29 L401.50,426.14 L402.00,425.98 L402.50,425.83 L403.00,425.67 L403.50,425.52 L404.00,425.36 L404.50,425.21 L405.00,425.05 L405.50,424.90 L406.00,424.74 L406.50,424.59 L407.00,424.43 L407.50,424.28 L408.00,424.13 L408.50,423.97 L409.00,423.82 L409.50,423.67 L410.00,423.51 L410.50,423.36 L411.00,423.21 L411.50,423.05 L412.00,422.90 L412.50,422.75 L413.00,422.60 L413.50,422.45 L414.00,422.29 L414.50,422.14 L415.00,421.99 L415.50,421.84 L416.00,421.69 L416.50,421.54 L417.00,421.39 L417.50,421.24 L418.00,421.09 L418.50,420.94 L419.00,420.79 L419.50,420.64 L420.00,420.49 L420.50,420.34 L421.00,420.19 L421.50,420.04 L422.00,419.89 L422.50,419.74 L423.00,419.59 L423.50,419.44 L424.00,419.29 L424.50,419.14 L425.00,418.99 L425.50,418.85 L426.00,418.70 L426.50,418.55 L427.00,418.40 L427.50,418.25 L428.00,418.11 L428.50,417.96 L429.00,417.81 L429.50,417.66 L430.00,417.52 L430.50,417.37 L431.00,417.22 L431.50,417.07 L432.00,416.93 L432.50,416.78 L433.00,416.63 L433.50,416.49 L434.00,416.34 L434.50,416.19 L435.00,416.05 L435.50,415.90 L436.00,415.76 L436.50,415.61 L437.00,415.46 L437.50,415.32 L438.00,415.17 L438.50,415.03 L439.00,414.88 L439.50,414.74 L440.00,414.59 L440.50,414.44 L441.00,414.30 L441.50,414.15 L442.00,414.01 L442.50,413.86 L443.00,413.72 L443.50,413.57 L444.00,413.43 L444.50,413.29 L445.00,413.14 L445.50,413.00 L446.00,412.85 L446.50,412.71 L447.00,412.56 L447.50,412.42 L448.00,412.28 L448.50,412.13 L449.00,411.99 L449.50,411.84 L450.00,411.70 L450.50,411.56 L451.00,411.41 L451.50,411.27 L452.00,411.12 L452.50,410.98 L453.00,410.84 L453.50,410.69 L454.00,410.55 L454.50,410.41 L455.00,410.26 L455.50,410.12 L456.00,409.98 L456.50,409.83 L457.00,409.69 L457.50,409.55 L458.00,409.41 L458.50,409.26 L459.00,409.12 L459.50,408.98 L460.00,408.83 L460.50,408.69 L461.00,408.55 L461.50,408.41 L462.00,408.26 L462.50,408.12 L463.00,407.98 L463.50,407.83 L464.00,407.69 L464.50,407.55 L465.00,407.41 L465.50,407.26 L466.00,407.12 L466.50,406.98 L467.00,406.84 L467.50,406.69 L468.00,406.55 L468.50,406.41 L469.00,406.27 L469.50,406.13 L470.00,405.98 L470.50,405.84 L471.00,405.70 L471.50,405.56 L472.00,405.41 L472.50,405.27 L473.00,405.13 L473.50,404.99 L474.00,404.84 L474.50,404.70 L475.00,404.56 L475.50,404.42 L476.00,404.27 L476.50,404.13 L477.00,403.99 L477.50,403.85 L478.00,403.71 L478.50,403.56 L479.00,403.42 L479.50,403.28 L480.00,403.14 L480.50,402.99 L481.00,402.85 L481.50,402.71 L482.00,402.57 L482.50,402.42 L483.00,402.28 L483.50,402.14 L484.00,402.00 L484.50,401.85 L485.00,401.71 L485.50,401.57 L486.00,401.42 L486.50,401.28 L487.00,401.14 L487.50,401.00 L488.00,400.85 L488.50,400.71 L489.00,400.57 L489.50,400.42 L490.00,400.28 L490.50,400.14 L491.00,400.00 L491.50,399.85 L492.00,399.71 L492.50,399.57 L493.00,399.42 L493.50,399.28 L494.00,399.14 L494.50,398.99 L495.00,398.85 L495.50,398.71 L496.00,398.56 L496.50,398.42 L497.00,398.28 L497.50,398.13 L498.00,397.99 L498.50,397.84 L499.00,397.70 L499.50,397.56 L500.00,397.41 L500.50,397.27 L501.00,397.12 L501.50,396.98 L502.00,396.83 L502.50,396.69 L503.00,396.55 L503.50,396.40 L504.00,396.26 L504.50,396.11 L505.00,395.97 L505.50,395.82 L506.00,395.68 L506.50,395.53 L507.00,395.39 L507.50,395.24 L508.00,395.10 L508.50,394.95 L509.00,394.81 L509.50,394.66 L510.00,394.51 L510.50,394.37 L511.00,394.22 L511.50,394.08 L512.00,393.93 L512.50,393.78 L513.00,393.64 L513.50,393.49 L514.00,393.35 L514.50,393.20 L515.00,393.05 L515.50,392.91 L516.00,392.76 L516.50,392.61 L517.00,392.46 L517.50,392.32 L518.00,392.17 L518.50,392.02 L519.00,391.88 L519.50,391.73 L520.00,391.58 L520.50,391.43 L521.00,391.28 L521.50,391.14 L522.00,390.99 L522.50,390.84 L523.00,390.69 L523.50,390.54 L524.00,390.39 L524.50,390.24 L525.00,390.10 L525.50,389.95 L526.00,389.80 L526.50,389.65 L527.00,389.50 L527.50,389.35 L528.00,389.20 L528.50,389.05 L529.00,388.90 L529.50,388.75 L530.00,388.60 L530.50,388.45 L531.00,388.30 L531.50,388.15 L532.00,387.99 L532.50,387.84 L533.00,387.69 L533.50,387.54 L534.00,387.39 L534.50,387.24 L535.00,387.09 L535.50,386.93 L536.00,386.78 L536.50,386.63 L537.00,386.48 L537.50,386.32 L538.00,386.17 L538.50,386.02 L539.00,385.86 L539.50,385.71 L540.00,385.56 L540.50,385.40 L541.00,385.25 L541.50,385.10 L542.00,384.94 L542.50,384.79 L543.00,384.63 L543.50,384.48 L544.00,384.32 L544.50,384.17 L545.00,384.01 L545.50,383.86 L546.00,383.70 L546.50,383.54 L547.00,383.39 L547.50,383.23 L548.00,383.08 L548.50,382.92 L549.00,382.76 L549.50,382.61 L550.00,382.45 L550.50,382.29 L551.00,382.13 L551.50,381.98 L552.00,381.82 L552.50,381.66 L553.00,381.50 L553.50,381.34 L554.00,381.18 L554.50,381.02 L555.00,380.86 L555.50,380.71 L556.00,380.55 L556.50,380.39 L557.00,380.23 L557.50,380.07 L558.00,379.90 L558.50,379.74 L559.00,379.58 L559.50,379.42 L560.00,379.26 L560.50,379.10 L561.00,378.94 L561.50,378.77 L562.00,378.61 L562.50,378.45 L563.00,378.29 L563.50,378.12 L564.00,377.96 L564.50,377.80 L565.00,377.63 L565.50,377.47 L566.00,377.31 L566.50,377.14 L567.00,376.98 L567.50,376.81 L568.00,376.65 L568.50,376.48 L569.00,376.32 L569.50,376.15 L570.00,375.98 L570.50,375.82 L571.00,375.65 L571.50,375.48 L572.00,375.32 L572.50,375.15 L573.00,374.98 L573.50,374.81 L574.00,374.65 L574.50,374.48 L575.00,374.31 L575.50,374.14 L576.00,373.97 L576.50,373.80 L577.00,373.63 L577.50,373.46 L578.00,373.29 L578.50,373.12 L579.00,372.95 L579.50,372.78 L580.00,372.61 L580.50,372.44 L581.00,372.26 L581.50,372.09 L582.00,371.92 L582.50,371.75 L583.00,371.57 L583.50,371.40 L584.00,371.23 L584.50,371.05 L585.00,370.88 L585.50,370.70 L586.00,370.53 L586.50,370.35 L587.00,370.18 L587.50,370.00 L588.00,369.83 L588.50,369.65 L589.00,369.47 L589.50,369.30 L590.00,369.12 L590.50,368.94 L591.00,368.77 L591.50,368.59 L592.00,368.41 L592.50,368.23 L593.00,368.05 L593.50,367.87 L594.00,367.69 L594.50,367.52 L595.00,367.34 L595.50,367.16 L596.00,366.98 L596.50,366.80 L597.00,366.61 L597.50,366.43 L598.00,366.25 L598.50,366.07 L599.00,365.89 L599.50,365.71 L600.00,365.53 L600.50,365.35 L601.00,365.17 L601.50,364.99 L602.00,364.80 L602.50,364.62 L603.00,364.44 L603.50,364.26 L604.00,364.08 L604.50,363.89 L605.00,363.71 L605.50,363.53 L606.00,363.35 L606.50,363.17 L607.00,362.99 L607.50,362.80 L608.00,362.62 L608.50,362.44 L609.00,362.26 L609.50,362.08 L610.00,361.90 L610.50,361.71 L611.00,361.53 L611.50,361.35 L612.00,361.17 L612.50,360.99 L613.00,360.81 L613.50,360.63 L614.00,360.45 L614.50,360.27 L615.00,360.09 L615.50,359.91 L616.00,359.73 L616.50,359.55 L617.00,359.37 L617.50,359.19 L618.00,359.01 L618.50,358.83 L619.00,358.66 L619.50,358.48 L620.00,358.30 L620.50,358.12 L621.00,357.94 L621.50,357.77 L622.00,357.59 L622.50,357.42 L623.00,357.24 L623.50,357.06 L624.00,356.89 L624.50,356.71 L625.00,356.54 L625.50,356.37 L626.00,356.19 L626.50,356.02 L627.00,355.85 L627.50,355.67 L628.00,355.50 L628.50,355.33 L629.00,355.16 L629.50,354.99 L630.00,354.82 L630.50,354.65 L631.00,354.48 L631.50,354.31 L632.00,354.14 L632.50,353.97 L633.00,353.81 L633.50,353.64 L634.00,353.47 L634.50,353.31 L635.00,353.14 L635.50,352.98 L636.00,352.82 L636.50,352.65 L637.00,352.49 L637.50,352.33 L638.00,352.17 L638.50,352.01 L639.00,351.85 L639.50,351.69 L640.00,351.53 L640.50,351.37 L641.00,351.21 L641.50,351.06 L642.00,350.90 L642.50,350.75 L643.00,350.59 L643.50,350.44 L644.00,350.29 L644.50,350.13 L645.00,349.98 L645.50,349.83 L646.00,349.68 L646.50,349.53 L647.00,349.38 L647.50,349.24 L648.00,349.09 L648.50,348.95 L649.00,348.80 L649.50,348.66 L650.00,348.51 L650.50,348.37 L651.00,348.23 L651.50,348.09 L652.00,347.95 L652.50,347.81 L653.00,347.67 L653.50,347.54 L654.00,347.40 L654.50,347.27 L655.00,347.13 L655.50,347.00 L656.00,346.87 L656.50,346.74 L657.00,346.61 L657.50,346.48 L658.00,346.35 L658.50,346.22 L659.00,346.10 L659.50,345.97 L660.00,345.85 L660.50,345.73 L661.00,345.61 L661.50,345.50 L662.00,345.38 L662.50,345.27 L663.00,345.16 L663.50,345.05 L664.00,344.95 L664.50,344.84 L665.00,344.74 L665.50,344.65 L666.00,344.55 L666.50,344.46 L667.00,344.37 L667.50,344.28 L668.00,344.20 L668.50,344.12 L669.00,344.04 L669.50,343.97 L670.00,343.90 L670.50,343.83 L671.00,343.77 L671.50,343.71 L672.00,343.66 L672.50,343.61 L673.00,343.56 L673.50,343.52 L674.00,343.48 L674.50,343.45 L675.00,343.42 L675.50,343.39 L676.00,343.37 L676.50,343.36 L677.00,343.35 L677.50,343.34 L678.00,343.34 L678.50,343.35 L679.00,343.36 L679.50,343.37 L680.00,343.39 L680.50,343.42 L681.00,343.45 L681.50,343.49 L682.00,343.53 L682.50,343.58 L683.00,343.64 L683.50,343.70 L684.00,343.77 L684.50,343.84 L685.00,343.92 L685.50,344.01 L686.00,344.10 L686.50,344.20 L687.00,344.31 L687.50,344.42 L688.00,344.55 L688.50,344.67 L689.00,344.81 L689.50,344.95 L690.00,345.10 L690.50,345.26 L691.00,345.42 L691.50,345.60 L692.00,345.78 L692.50,345.96 L693.00,346.16 L693.50,346.36 L694.00,346.58 L694.50,346.80 L695.00,347.03 L695.50,347.26 L696.00,347.51 L696.50,347.76 L697.00,348.03 L697.50,348.30 L698.00,348.58 L698.50,348.87 L699.00,349.17 L699.50,349.48 L700.00,349.79 L700.50,350.12 L701.00,350.46 L701.50,350.80 L702.00,351.16 L702.50,351.52 L703.00,351.90 L703.50,352.28 L704.00,352.68 L704.50,353.08 L705.00,353.50 L705.50,353.93 L706.00,354.36 L706.50,354.81 L707.00,355.27 L707.50,355.73 L708.00,356.21 L708.50,356.70 L709.00,357.20 L709.50,357.72 L710.00,358.24 L710.50,358.77 L711.00,359.32 L711.50,359.88 L712.00,360.45 L712.50,361.03 L713.00,361.62 L713.50,362.22 L714.00,362.84 L714.50,363.47 L715.00,364.11 L715.50,364.77 L716.00,365.44 L716.50,366.12 L717.00,366.83 L717.50,367.55 L718.00,368.28 L718.50,369.04 L719.00,369.81 L719.50,370.61 L720.00,371.42 L720.50,372.26 L721.00,373.12 L721.50,374.00 L722.00,374.91 L722.50,375.84 L723.00,376.80 L723.50,377.78 L724.00,378.79 L724.50,379.83 L725.00,380.89 L725.50,381.99 L726.00,383.12 L726.50,384.27 L727.00,385.46 L727.50,386.68 L728.00,387.94 L728.50,389.22 L729.00,390.54 L729.50,391.89 L730.00,393.27 L730.50,394.68 L731.00,396.12 L731.50,397.59 L732.00,399.08 L732.50,400.60 L733.00,402.14 L733.50,403.71 L734.00,405.30 L734.50,406.91 L735.00,408.54 L735.50,410.20 L736.00,411.87 L736.50,413.56 L737.00,415.27 L737.50,417.00 L738.00,418.74 L738.50,420.50 L739.00,422.27 L739.50,424.06 L740.00,425.86 L740.50,427.67 L741.00,429.49 L741.50,431.32 L742.00,433.16 L742.50,435.00 L743.00,436.85 L743.50,438.71 L744.00,440.58 L744.50,442.44 L745.00,444.31 L745.50,446.19 L746.00,448.06 L746.50,449.93 L747.00,451.80 L747.50,453.67 L748.00,455.54 L748.50,457.40 L749.00,459.26 L749.50,461.11 L750.00,462.95 L750.50,464.79 L751.00,466.62 L751.50,468.44 L752.00,470.24 L752.50,472.04 L753.00,473.82 L753.50,475.59 L754.00,477.35 L754.50,479.09 L755.00,480.81 L755.50,482.51 L756.00,484.20 L756.50,485.87 L757.00,487.51 L757.50,489.14 L758.00,490.74 L758.50,492.32 L759.00,493.88 L759.50,495.42 L760.00,496.93 L760.50,498.42 L761.00,499.89 L761.50,501.33 L762.00,502.74 L762.50,504.13 L763.00,505.49 L763.50,506.83 L764.00,508.14 L764.50,509.43 L765.00,510.69 L765.50,511.92 L766.00,513.13 L766.50,514.32 L767.00,515.48 L767.50,516.62 L768.00,517.73 L768.50,518.82 L769.00,519.88 L769.50,520.93 L770.00,521.95 L770.50,522.94 L771.00,523.91 L771.50,524.87 L772.00,525.79 L772.50,526.70 L773.00,527.59 L773.50,528.45 L774.00,529.29 L774.50,530.11 L775.00,530.91 L775.50,531.69 L776.00,532.45 L776.50,533.18 L777.00,533.90 L777.50,534.60 L778.00,535.28 L778.50,535.94 L779.00,536.58 L779.50,537.20 L780.00,537.80 L780.50,538.38 L781.00,538.94 L781.50,539.49 L782.00,540.02 L782.50,540.53 L783.00,541.02 L783.50,541.49 L784.00,541.95 L784.50,542.39 L785.00,542.82 L785.50,543.22 L786.00,543.61 L786.50,543.99 L787.00,544.35 L787.50,544.69 L788.00,545.01 L788.50,545.33 L789.00,545.62 L789.50,545.90 L790.00,546.17 L790.50,546.42 L791.00,546.65 L791.50,546.87 L792.00,547.08 L792.50,547.27 L793.00,547.45 L793.50,547.62 L794.00,547.77 L794.50,547.91 L795.00,548.03 L795.50,548.15 L796.00,548.25 L796.50,548.33 L797.00,548.41 L797.50,548.47 L798.00,548.52 L798.50,548.56 L799.00,548.59 L799.50,548.60 L800.00,548.61 L800.50,548.60 L801.00,548.58 L801.50,548.55 L802.00,548.51 L802.50,548.47 L803.00,548.41 L803.50,548.34 L804.00,548.26 L804.50,548.17 L805.00,548.07 L805.50,547.96 L806.00,547.85 L806.50,547.72 L807.00,547.59 L807.50,547.44 L808.00,547.29 L808.50,547.13 L809.00,546.97 L809.50,546.79 L810.00,546.61 L810.50,546.42 L811.00,546.22 L811.50,546.02 L812.00,545.81 L812.50,545.59 L813.00,545.37 L813.50,545.14 L814.00,544.90 L814.50,544.66 L815.00,544.41 L815.50,544.16 L816.00,543.90 L816.50,543.64 L817.00,543.37 L817.50,543.10 L818.00,542.82 L818.50,542.54 L819.00,542.25 L819.50,541.96 L820.00,541.67 L820.50,541.37 L821.00,541.07 L821.50,540.76 L822.00,540.45 L822.50,540.14 L823.00,539.83 L823.50,539.51 L824.00,539.20 L824.50,538.88 L825.00,538.55 L825.50,538.23 L826.00,537.91 L826.50,537.58 L827.00,537.25 L827.50,536.92 L828.00,536.59 L828.50,536.26 L829.00,535.93 L829.50,535.60 L830.00,535.26 L830.50,534.93 L831.00,534.59 L831.50,534.25 L832.00,533.91 L832.50,533.58 L833.00,533.24 L833.50,532.89 L834.00,532.55 L834.50,532.21 L835.00,531.87 L835.50,531.52 L836.00,531.18 L836.50,530.83 L837.00,530.48 L837.50,530.13 L838.00,529.79 L838.50,529.44 L839.00,529.09 L839.50,528.73 L840.00,528.38 L840.50,528.03 L841.00,527.67 L841.50,527.32 L842.00,526.96 L842.50,526.61 L843.00,526.25 L843.50,525.89 L844.00,525.53 L844.50,525.17 L845.00,524.81 L845.50,524.45 L846.00,524.09 L846.50,523.72 L847.00,523.36 L847.50,522.99 L848.00,522.63 L848.50,522.26 L849.00,521.90 L849.50,521.53 L850.00,521.16 L850.50,520.79 L851.00,520.42 L851.50,520.05 L852.00,519.68 L852.50,519.31 L853.00,518.93 L853.50,518.56 L854.00,518.19 L854.50,517.81 L855.00,517.44 L855.50,517.06 L856.00,516.68 L856.50,516.31 L857.00,515.93 L857.50,515.55 L858.00,515.17 L858.50,514.79 L859.00,514.41 L859.50,514.03 L860.00,513.65 L860.50,513.27 L861.00,512.88 L861.50,512.50 L862.00,512.12 L862.50,511.73 L863.00,511.35 L863.50,510.96 L864.00,510.57 L864.50,510.19 L865.00,509.80 L865.50,509.41 L866.00,509.02 L866.50,508.63 L867.00,508.25 L867.50,507.86 L868.00,507.47 L868.50,507.07 L869.00,506.68 L869.50,506.29 L870.00,505.90 L870.50,505.51 L871.00,505.11 L871.50,504.72 L872.00,504.33 L872.50,503.93 L873.00,503.54 L873.50,503.14 L874.00,502.74 L874.50,502.35 L875.00,501.95 L875.50,501.55 L876.00,501.16 L876.50,500.76 L877.00,500.36 L877.50,499.96 L878.00,499.56 L878.50,499.16 L879.00,498.76 L879.50,498.36 L880.00,497.96 L880.50,497.56 L881.00,497.16 L881.50,496.76 L882.00,496.36 L882.50,495.96 L883.00,495.56 L883.50,495.15 L884.00,494.75 L884.50,494.35 L885.00,493.94 L885.50,493.54 L886.00,493.14 L886.50,492.73 L887.00,492.33 L887.50,491.92 L888.00,491.52 L888.50,491.11 L889.00,490.71 L889.50,490.30 L890.00,489.90 L890.50,489.49 L891.00,489.08 L891.50,488.68 L892.00,488.27 L892.50,487.86 L893.00,487.46 L893.50,487.05 L894.00,486.64 L894.50,486.24 L895.00,485.83 L895.50,485.42 L896.00,485.01 L896.50,484.61 L897.00,484.20 L897.50,483.79 L898.00,483.38 L898.50,482.97 L899.00,482.56 L899.50,482.16 L900.00,481.75 L900.50,481.34 L901.00,480.93 L901.50,480.52 L902.00,480.11 L902.50,479.70 L903.00,479.29 L903.50,478.88 L904.00,478.48 L904.50,478.07 L905.00,477.66 L905.50,477.25 L906.00,476.84 L906.50,476.43 L907.00,476.02 L907.50,475.61 L908.00,475.20 L908.50,474.79 L909.00,474.39 L909.50,473.98 L910.00,473.57 L910.50,473.16 L911.00,472.75 L911.50,472.34 L912.00,471.93 L912.50,471.52 L913.00,471.12 L913.50,470.71 L914.00,470.30 L914.50,469.89 L915.00,469.48 L915.50,469.08 L916.00,468.67 L916.50,468.26 L917.00,467.85 L917.50,467.45 L918.00,467.04 L918.50,466.63 L919.00,466.22 L919.50,465.82 L920.00,465.41 L920.50,465.01 L921.00,464.60 L921.50,464.19 L922.00,463.79 L922.50,463.38 L923.00,462.98 L923.50,462.57 L924.00,462.17 L924.50,461.76 L925.00,461.36 L925.50,460.95 L926.00,460.55 L926.50,460.15 L927.00,459.74 L927.50,459.34 L928.00,458.94 L928.50,458.54 L929.00,458.13 L929.50,457.73 L930.00,457.33 L930.50,456.93 L931.00,456.53 L931.50,456.13 L932.00,455.73 L932.50,455.33 L933.00,454.93 L933.50,454.53 L934.00,454.13 L934.50,453.73 L935.00,453.33 L935.50,452.94 L936.00,452.54 L936.50,452.14 L937.00,451.74 L937.50,451.35 L938.00,450.95 L938.50,450.56 L939.00,450.16 L939.50,449.77 L940.00,449.37 L940.50,448.98 L941.00,448.59 L941.50,448.20 L942.00,447.80 L942.50,447.41 L943.00,447.02 L943.50,446.63 L944.00,446.24 L944.50,445.85 L945.00,445.46 L945.50,445.07 L946.00,444.68 L946.50,444.30 L947.00,443.91 L947.50,443.52 L948.00,443.14 L948.50,442.75 L949.00,442.37 L949.50,441.98 L950.00,441.60 L950.50,441.21 L951.00,440.83 L951.50,440.45 L952.00,440.07 L952.50,439.69 L953.00,439.31 L953.50,438.93 L954.00,438.55 L954.50,438.17 L955.00,437.79 L955.50,437.42 L956.00,437.04 L956.50,436.66 L957.00,436.29 L957.50,435.91 L958.00,435.54 L958.50,435.17 L959.00,434.79 L959.50,434.42 L960.00,434.05 L960.50,433.68 L961.00,433.31 L961.50,432.94 L962.00,432.57 L962.50,432.21 L963.00,431.84 L963.50,431.47 L964.00,431.11 L964.50,430.74 L965.00,430.38 L965.50,430.02 L966.00,429.66 L966.50,429.29 L967.00,428.93 L967.50,428.57 L968.00,428.22 L968.50,427.86 L969.00,427.50 L969.50,427.14 L970.00,426.79 L970.50,426.43 L971.00,426.08 L971.50,425.73 L972.00,425.37 L972.50,425.02 L973.00,424.67 L973.50,424.32 L974.00,423.97 L974.50,423.63 L975.00,423.28 L975.50,422.93 L976.00,422.59 L976.50,422.24 L977.00,421.90 L977.50,421.56 L978.00,421.22 L978.50,420.87 L979.00,420.54 L979.50,420.20 L980.00,419.86 L980.50,419.52 L981.00,419.19 L981.50,418.85 L982.00,418.52 L982.50,418.19 L983.00,417.85 L983.50,417.52 L984.00,417.19 L984.50,416.86 L985.00,416.54 L985.50,416.21 L986.00,415.88 L986.50,415.56 L987.00,415.24 L987.50,414.91 L988.00,414.59 L988.50,414.27 L989.00,413.95 L989.50,413.63 L990.00,413.32 L990.50,413.00 L991.00,412.69 L991.50,412.37 L992.00,412.06 L992.50,411.75 L993.00,411.44 L993.50,411.13 L994.00,410.82 L994.50,410.51 L995.00,410.21 L995.50,409.90 L996.00,409.60 L996.50,409.30 L997.00,409.00 L997.50,408.70 L998.00,408.40 L998.50,408.10 L999.00,407.80 L999.50,407.51 L1000.00,407.21 L1000.50,406.92 L1001.00,406.63 L1001.50,406.34 L1002.00,406.05 L1002.50,405.76 L1003.00,405.48 L1003.50,405.19 L1004.00,404.91 L1004.50,404.62 L1005.00,404.34 L1005.50,404.06 L1006.00,403.78 L1006.50,403.51 L1007.00,403.23 L1007.50,402.96 L1008.00,402.68 L1008.50,402.41 L1009.00,402.14 L1009.50,401.87 L1010.00,401.60 L1010.50,401.33 L1011.00,401.07 L1011.50,400.80 L1012.00,400.54 L1012.50,400.28 L1013.00,400.02 L1013.50,399.76 L1014.00,399.50 L1014.50,399.25 L1015.00,398.99 L1015.50,398.74 L1016.00,398.49 L1016.50,398.24 L1017.00,397.99 L1017.50,397.74 L1018.00,397.50 L1018.50,397.25 L1019.00,397.01 L1019.50,396.77 L1020.00,396.53 L1020.50,396.29 L1021.00,396.06 L1021.50,395.82 L1022.00,395.59 L1022.50,395.35 L1023.00,395.12 L1023.50,394.89 L1024.00,394.67 L1024.50,394.44 L1025.00,394.22 L1025.50,393.99 L1026.00,393.77 L1026.50,393.55 L1027.00,393.33 L1027.50,393.12 L1028.00,392.90 L1028.50,392.69 L1029.00,392.47 L1029.50,392.26 L1030.00,392.06 L1030.50,391.85 L1031.00,391.64 L1031.50,391.44 L1032.00,391.24 L1032.50,391.04 L1033.00,390.84 L1033.50,390.64 L1034.00,390.44 L1034.50,390.25 L1035.00,390.06 L1035.50,389.87 L1036.00,389.68 L1036.50,389.49 L1037.00,389.30 L1037.50,389.12 L1038.00,388.94 L1038.50,388.76 L1039.00,388.58 L1039.50,388.40 L1040.00,388.23 L1040.50,388.05 L1041.00,387.88 L1041.50,387.71 L1042.00,387.54" stroke="#ff8000" stroke-width="1.1"/><path d="M385.80,609.03 L386.30,608.94 L386.80,608.85 L387.30,608.77 L387.80,608.68 L388.30,608.59 L388.80,608.51 L389.30,608.42 L389.80,608.34 L390.30,608.25 L390.80,608.17 L391.30,608.09 L391.80,608.00 L392.30,607.92 L392.80,607.84 L393.30,607.76 L393.80,607.68 L394.30,607.61 L394.80,607.53 L395.30,607.45 L395.80,607.38 L396.30,607.30 L396.80,607.22 L397.30,607.15 L397.80,607.08 L398.30,607.00 L398.80,606.93 L399.30,606.86 L399.80,606.79 L400.30,606.72 L400.80,606.65 L401.30,606.58 L401.80,606.51 L402.30,606.44 L402.80,606.37 L403.30,606.30 L403.80,606.24 L404.30,606.17 L404.80,606.11 L405.30,606.04 L405.80,605.98 L406.30,605.91 L406.80,605.85 L407.30,605.79 L407.80,605.72 L408.30,605.66 L408.80,605.60 L409.30,605.54 L409.80,605.48 L410.30,605.42 L410.80,605.36 L411.30,605.30 L411.80,605.24 L412.30,605.18 L412.80,605.12 L413.30,605.07 L413.80,605.01 L414.30,604.95 L414.80,604.90 L415.30,604.84 L415.80,604.79 L416.30,604.73 L416.80,604.68 L417.30,604.62 L417.80,604.57 L418.30,604.52 L418.80,604.46 L419.30,604.41 L419.80,604.36 L420.30,604.31 L420.80,604.26 L421.30,604.21 L421.80,604.15 L422.30,604.10 L422.80,604.05 L423.30,604.00 L423.80,603.96 L424.30,603.91 L424.80,603.86 L425.30,603.81 L425.80,603.76 L426.30,603.71 L426.80,603.66 L427.30,603.62 L427.80,603.57 L428.30,603.52 L428.80,603.48 L429.30,603.43 L429.80,603.38 L430.30,603.34 L430.80,603.29 L431.30,603.25 L431.80,603.20 L432.30,603.16 L432.80,603.11 L433.30,603.07 L433.80,603.02 L434.30,602.98 L434.80,602.93 L435.30,602.89 L435.80,602.85 L436.30,602.80 L436.80,602.76 L437.30,602.72 L437.80,602.67 L438.30,602.63 L438.80,602.59 L439.30,602.54 L439.80,602.50 L440.30,602.46 L440.80,602.42 L441.30,602.37 L441.80,602.33 L442.30,602.29 L442.80,602.25 L443.30,602.21 L443.80,602.16 L444.30,602.12 L444.80,602.08 L445.30,602.04 L445.80,602.00 L446.30,601.96 L446.80,601.91 L447.30,601.87 L447.80,601.83 L448.30,601.79 L448.80,601.75 L449.30,601.71 L449.80,601.67 L450.30,601.62 L450.80,601.58 L451.30,601.54 L451.80,601.50 L452.30,601.46 L452.80,601.42 L453.30,601.38 L453.80,601.33 L454.30,601.29 L454.80,601.25 L455.30,601.21 L455.80,601.17 L456.30,601.12 L456.80,601.08 L457.30,601.04 L457.80,601.00 L458.30,600.96 L458.80,600.91 L459.30,600.87 L459.80,600.83 L460.30,600.78 L460.80,600.74 L461.30,600.70 L461.80,600.66 L462.30,600.61 L462.80,600.57 L463.30,600.52 L463.80,600.48 L464.30,600.44 L464.80,600.39 L465.30,600.35 L465.80,600.30 L466.30,600.26 L466.80,600.21 L467.30,600.17 L467.80,600.12 L468.30,600.08 L468.80,600.03 L469.30,599.98 L469.80,599.94 L470.30,599.89 L470.80,599.84 L471.30,599.80 L471.80,599.75 L472.30,599.70 L472.80,599.65 L473.30,599.61 L473.80,599.56 L474.30,599.51 L474.80,599.46 L475.30,599.41 L475.80,599.36 L476.30,599.31 L476.80,599.26 L477.30,599.21 L477.80,599.16 L478.30,599.11 L478.80,599.05 L479.30,599.00 L479.80,598.95 L480.30,598.90 L480.80,598.84 L481.30,598.79 L481.80,598.74 L482.30,598.68 L482.80,598.63 L483.30,598.57 L483.80,598.52 L484.30,598.46 L484.80,598.40 L485.30,598.35 L485.80,598.29 L486.30,598.23 L486.80,598.17 L487.30,598.11 L487.80,598.06 L488.30,598.00 L488.80,597.94 L489.30,597.88 L489.80,597.81 L490.30,597.75 L490.80,597.69 L491.30,597.63 L491.80,597.57 L492.30,597.50 L492.80,597.44 L493.30,597.37 L493.80,597.31 L494.30,597.24 L494.80,597.18 L495.30,597.11 L495.80,597.04 L496.30,596.97 L496.80,596.91 L497.30,596.84 L497.80,596.77 L498.30,596.70 L498.80,596.63 L499.30,596.55 L499.80,596.48 L500.30,596.41 L500.80,596.34 L501.30,596.26 L501.80,596.19 L502.30,596.11 L502.80,596.04 L503.30,595.96 L503.80,595.88 L504.30,595.81 L504.80,595.73 L505.30,595.65 L505.80,595.57 L506.30,595.49 L506.80,595.41 L507.30,595.33 L507.80,595.24 L508.30,595.16 L508.80,595.08 L509.30,594.99 L509.80,594.91 L510.30,594.82 L510.80,594.73 L511.30,594.65 L511.80,594.56 L512.30,594.47 L512.80,594.38 L513.30,594.29 L513.80,594.20 L514.30,594.11 L514.80,594.01 L515.30,593.92 L515.80,593.83 L516.30,593.73 L516.80,593.63 L517.30,593.54 L517.80,593.44 L518.30,593.34 L518.80,593.24 L519.30,593.14 L519.80,593.04 L520.30,592.94 L520.80,592.84 L521.30,592.73 L521.80,592.63 L522.30,592.52 L522.80,592.42 L523.30,592.31 L523.80,592.20 L524.30,592.09 L524.80,591.98 L525.30,591.87 L525.80,591.76 L526.30,591.65 L526.80,591.53 L527.30,591.42 L527.80,591.30 L528.30,591.19 L528.80,591.07 L529.30,590.95 L529.80,590.83 L530.30,590.71 L530.80,590.59 L531.30,590.47 L531.80,590.35 L532.30,590.22 L532.80,590.10 L533.30,589.97 L533.80,589.84 L534.30,589.71 L534.80,589.59 L535.30,589.46 L535.80,589.32 L536.30,589.19 L536.80,589.06 L537.30,588.92 L537.80,588.79 L538.30,588.65 L538.80,588.51 L539.30,588.38 L539.80,588.24 L540.30,588.09 L540.80,587.95 L541.30,587.81 L541.80,587.67 L542.30,587.52 L542.80,587.37 L543.30,587.23 L543.80,587.08 L544.30,586.93 L544.80,586.78 L545.30,586.62 L545.80,586.47 L546.30,586.32 L546.80,586.16 L547.30,586.00 L547.80,585.85 L548.30,585.69 L548.80,585.53 L549.30,585.37 L549.80,585.21 L550.30,585.04 L550.80,584.88 L551.30,584.71 L551.80,584.55 L552.30,584.38 L552.80,584.21 L553.30,584.04 L553.80,583.87 L554.30,583.70 L554.80,583.53 L555.30,583.35 L555.80,583.18 L556.30,583.00 L556.80,582.83 L557.30,582.65 L557.80,582.47 L558.30,582.29 L558.80,582.11 L559.30,581.93 L559.80,581.75 L560.30,581.56 L560.80,581.38 L561.30,581.19 L561.80,581.01 L562.30,580.82 L562.80,580.63 L563.30,580.44 L563.80,580.25 L564.30,580.06 L564.80,579.87 L565.30,579.68 L565.80,579.48 L566.30,579.29 L566.80,579.09 L567.30,578.90 L567.80,578.70 L568.30,578.50 L568.80,578.30 L569.30,578.10 L569.80,577.90 L570.30,577.70 L570.80,577.50 L571.30,577.29 L571.80,577.09 L572.30,576.88 L572.80,576.68 L573.30,576.47 L573.80,576.26 L574.30,576.05 L574.80,575.85 L575.30,575.63 L575.80,575.42 L576.30,575.21 L576.80,575.00 L577.30,574.79 L577.80,574.57 L578.30,574.36 L578.80,574.14 L579.30,573.93 L579.80,573.71 L580.30,573.49 L580.80,573.27 L581.30,573.05 L581.80,572.83 L582.30,572.61 L582.80,572.39 L583.30,572.17 L583.80,571.94 L584.30,571.72 L584.80,571.49 L585.30,571.27 L585.80,571.04 L586.30,570.81 L586.80,570.59 L587.30,570.36 L587.80,570.12 L588.30,569.89 L588.80,569.65 L589.30,569.42 L589.80,569.18 L590.30,568.94 L590.80,568.69 L591.30,568.44 L591.80,568.19 L592.30,567.94 L592.80,567.68 L593.30,567.42 L593.80,567.16 L594.30,566.90 L594.80,566.63 L595.30,566.35 L595.80,566.07 L596.30,565.79 L596.80,565.50 L597.30,565.21 L597.80,564.92 L598.30,564.62 L598.80,564.31 L599.30,564.00 L599.80,563.69 L600.30,563.36 L600.80,563.04 L601.30,562.70 L601.80,562.37 L602.30,562.02 L602.80,561.67 L603.30,561.31 L603.80,560.95 L604.30,560.58 L604.80,560.20 L605.30,559.82 L605.80,559.43 L606.30,559.03 L606.80,558.62 L607.30,558.21 L607.80,557.79 L608.30,557.36 L608.80,556.92 L609.30,556.48 L609.80,556.02 L610.30,555.56 L610.80,555.09 L611.30,554.61 L611.80,554.12 L612.30,553.62 L612.80,553.12 L613.30,552.60 L613.80,552.07 L614.30,551.54 L614.80,551.00 L615.30,550.44 L615.80,549.88 L616.30,549.31 L616.80,548.73 L617.30,548.14 L617.80,547.54 L618.30,546.93 L618.80,546.31 L619.30,545.69 L619.80,545.05 L620.30,544.41 L620.80,543.75 L621.30,543.09 L621.80,542.42 L622.30,541.73 L622.80,541.04 L623.30,540.34 L623.80,539.63 L624.30,538.91 L624.80,538.19 L625.30,537.45 L625.80,536.70 L626.30,535.95 L626.80,535.18 L627.30,534.41 L627.80,533.62 L628.30,532.83 L628.80,532.03 L629.30,531.22 L629.80,530.40 L630.30,529.57 L630.80,528.73 L631.30,527.88 L631.80,527.02 L632.30,526.16 L632.80,525.28 L633.30,524.40 L633.80,523.50 L634.30,522.60 L634.80,521.69 L635.30,520.76 L635.80,519.83 L636.30,518.89 L636.80,517.94 L637.30,516.98 L637.80,516.01 L638.30,515.04 L638.80,514.05 L639.30,513.05 L639.80,512.05 L640.30,511.03 L640.80,510.01 L641.30,508.97 L641.80,507.93 L642.30,506.88 L642.80,505.82 L643.30,504.75 L643.80,503.67 L644.30,502.58 L644.80,501.48 L645.30,500.37 L645.80,499.25 L646.30,498.13 L646.80,496.99 L647.30,495.85 L647.80,494.69 L648.30,493.53 L648.80,492.36 L649.30,491.17 L649.80,489.98 L650.30,488.78 L650.80,487.57 L651.30,486.35 L651.80,485.12 L652.30,483.89 L652.80,482.64 L653.30,481.39 L653.80,480.14 L654.30,478.87 L654.80,477.61 L655.30,476.33 L655.80,475.06 L656.30,473.78 L656.80,472.50 L657.30,471.22 L657.80,469.93 L658.30,468.65 L658.80,467.37 L659.30,466.08 L659.80,464.80 L660.30,463.52 L660.80,462.24 L661.30,460.97 L661.80,459.70 L662.30,458.43 L662.80,457.17 L663.30,455.92 L663.80,454.67 L664.30,453.43 L664.80,452.19 L665.30,450.97 L665.80,449.75 L666.30,448.54 L666.80,447.35 L667.30,446.16 L667.80,444.99 L668.30,443.83 L668.80,442.68 L669.30,441.56 L669.80,440.46 L670.30,439.39 L670.80,438.34 L671.30,437.32 L671.80,436.33 L672.30,435.38 L672.80,434.46 L673.30,433.58 L673.80,432.75 L674.30,431.95 L674.80,431.21 L675.30,430.51 L675.80,429.86 L676.30,429.27 L676.80,428.73 L677.30,428.25 L677.80,427.83 L678.30,427.48 L678.80,427.19 L679.30,426.96 L679.80,426.81 L680.30,426.73 L680.80,426.73 L681.30,426.80 L681.80,426.94 L682.30,427.16 L682.80,427.44 L683.30,427.79 L683.80,428.21 L684.30,428.69 L684.80,429.23 L685.30,429.83 L685.80,430.49 L686.30,431.21 L686.80,431.98 L687.30,432.80 L687.80,433.67 L688.30,434.59 L688.80,435.56 L689.30,436.57 L689.80,437.62 L690.30,438.72 L690.80,439.85 L691.30,441.02 L691.80,442.22 L692.30,443.45 L692.80,444.71 L693.30,445.97 L693.80,447.25 L694.30,448.53 L694.80,449.81 L695.30,451.08 L695.80,452.34 L696.30,453.57 L696.80,454.78 L697.30,455.97 L697.80,457.14 L698.30,458.30 L698.80,459.46 L699.30,460.61 L699.80,461.77 L700.30,462.93 L700.80,464.11 L701.30,465.30 L701.80,466.51 L702.30,467.75 L702.80,469.02 L703.30,470.32 L703.80,471.67 L704.30,473.06 L704.80,474.50 L705.30,475.99 L705.80,477.54 L706.30,479.15 L706.80,480.83 L707.30,482.58 L707.80,484.39 L708.30,486.25 L708.80,488.15 L709.30,490.10 L709.80,492.08 L710.30,494.08 L710.80,496.11 L711.30,498.15 L711.80,500.20 L712.30,502.25 L712.80,504.30 L713.30,506.33 L713.80,508.34 L714.30,510.33 L714.80,512.29 L715.30,514.22 L715.80,516.09 L716.30,517.92 L716.80,519.69 L717.30,521.40 L717.80,523.06 L718.30,524.66 L718.80,526.20 L719.30,527.69 L719.80,529.13 L720.30,530.52 L720.80,531.85 L721.30,533.14 L721.80,534.38 L722.30,535.57 L722.80,536.72 L723.30,537.82 L723.80,538.89 L724.30,539.91 L724.80,540.88 L725.30,541.83 L725.80,542.73 L726.30,543.59 L726.80,544.42 L727.30,545.22 L727.80,545.98 L728.30,546.72 L728.80,547.42 L729.30,548.09 L729.80,548.73 L730.30,549.35 L730.80,549.94 L731.30,550.51 L731.80,551.06 L732.30,551.58 L732.80,552.08 L733.30,552.56 L733.80,553.03 L734.30,553.48 L734.80,553.91 L735.30,554.32 L735.80,554.73 L736.30,555.12 L736.80,555.50 L737.30,555.87 L737.80,556.24 L738.30,556.59 L738.80,556.94 L739.30,557.29 L739.80,557.63 L740.30,557.97 L740.80,558.31 L741.30,558.64 L741.80,558.98 L742.30,559.32 L742.80,559.67 L743.30,560.01 L743.80,560.35 L744.30,560.70 L744.80,561.04 L745.30,561.39 L745.80,561.74 L746.30,562.08 L746.80,562.43 L747.30,562.78 L747.80,563.13 L748.30,563.48 L748.80,563.82 L749.30,564.17 L749.80,564.52 L750.30,564.87 L750.80,565.22 L751.30,565.57 L751.80,565.92 L752.30,566.26 L752.80,566.61 L753.30,566.96 L753.80,567.31 L754.30,567.65 L754.80,568.00 L755.30,568.34 L755.80,568.68 L756.30,569.03 L756.80,569.37 L757.30,569.71 L757.80,570.05 L758.30,570.39 L758.80,570.73 L759.30,571.06 L759.80,571.40 L760.30,571.73 L760.80,572.06 L761.30,572.39 L761.80,572.72 L762.30,573.05 L762.80,573.37 L763.30,573.69 L763.80,574.02 L764.30,574.33 L764.80,574.65 L765.30,574.97 L765.80,575.28 L766.30,575.59 L766.80,575.90 L767.30,576.20 L767.80,576.50 L768.30,576.81 L768.80,577.10 L769.30,577.40 L769.80,577.69 L770.30,577.98 L770.80,578.26 L771.30,578.55 L771.80,578.83 L772.30,579.10 L772.80,579.38 L773.30,579.65 L773.80,579.92 L774.30,580.18 L774.80,580.44 L775.30,580.70 L775.80,580.95 L776.30,581.20 L776.80,581.44 L777.30,581.68 L777.80,581.92 L778.30,582.15 L778.80,582.38 L779.30,582.61 L779.80,582.83 L780.30,583.05 L780.80,583.26 L781.30,583.47 L781.80,583.67 L782.30,583.87 L782.80,584.06 L783.30,584.25 L783.80,584.44 L784.30,584.62 L784.80,584.79 L785.30,584.97 L785.80,585.13 L786.30,585.30 L786.80,585.46 L787.30,585.61 L787.80,585.76 L788.30,585.91 L788.80,586.05 L789.30,586.19 L789.80,586.33 L790.30,586.46 L790.80,586.59 L791.30,586.71 L791.80,586.84 L792.30,586.95 L792.80,587.07 L793.30,587.18 L793.80,587.29 L794.30,587.39 L794.80,587.49 L795.30,587.59 L795.80,587.68 L796.30,587.78 L796.80,587.86 L797.30,587.95 L797.80,588.03 L798.30,588.11 L798.80,588.19 L799.30,588.26 L799.80,588.33 L800.30,588.40 L800.80,588.47 L801.30,588.53 L801.80,588.59 L802.30,588.65 L802.80,588.71 L803.30,588.76 L803.80,588.81 L804.30,588.86 L804.80,588.91 L805.30,588.95 L805.80,589.00 L806.30,589.04 L806.80,589.08 L807.30,589.11 L807.80,589.15 L808.30,589.18 L808.80,589.21 L809.30,589.24 L809.80,589.27 L810.30,589.30 L810.80,589.32 L811.30,589.35 L811.80,589.37 L812.30,589.39 L812.80,589.41 L813.30,589.43 L813.80,589.45 L814.30,589.46 L814.80,589.48 L815.30,589.49 L815.80,589.51 L816.30,589.52 L816.80,589.53 L817.30,589.54 L817.80,589.55 L818.30,589.56 L818.80,589.57 L819.30,589.57 L819.80,589.58 L820.30,589.59 L820.80,589.59 L821.30,589.60 L821.80,589.60 L822.30,589.61 L822.80,589.61 L823.30,589.61 L823.80,589.61 L824.30,589.61 L824.80,589.61 L825.30,589.61 L825.80,589.61 L826.30,589.60 L826.80,589.60 L827.30,589.59 L827.80,589.58 L828.30,589.57 L828.80,589.56 L829.30,589.55 L829.80,589.53 L830.30,589.52 L830.80,589.50 L831.30,589.48 L831.80,589.46 L832.30,589.44 L832.80,589.41 L833.30,589.38 L833.80,589.36 L834.30,589.33 L834.80,589.29 L835.30,589.26 L835.80,589.22 L836.30,589.18 L836.80,589.14 L837.30,589.10 L837.80,589.06 L838.30,589.01 L838.80,588.96 L839.30,588.91 L839.80,588.85 L840.30,588.79 L840.80,588.73 L841.30,588.67 L841.80,588.60 L842.30,588.54 L842.80,588.46 L843.30,588.39 L843.80,588.31 L844.30,588.23 L844.80,588.15 L845.30,588.07 L845.80,587.98 L846.30,587.88 L846.80,587.79 L847.30,587.69 L847.80,587.59 L848.30,587.48 L848.80,587.38 L849.30,587.26 L849.80,587.15 L850.30,587.03 L850.80,586.91 L851.30,586.78 L851.80,586.65 L852.30,586.52 L852.80,586.38 L853.30,586.24 L853.80,586.10 L854.30,585.95 L854.80,585.80 L855.30,585.64 L855.80,585.48 L856.30,585.31 L856.80,585.15 L857.30,584.97 L857.80,584.80 L858.30,584.61 L858.80,584.43 L859.30,584.24 L859.80,584.04 L860.30,583.84 L860.80,583.64 L861.30,583.43 L861.80,583.22 L862.30,583.01 L862.80,582.80 L863.30,582.58 L863.80,582.37 L864.30,582.16 L864.80,581.94 L865.30,581.73 L865.80,581.52 L866.30,581.31 L866.80,581.11 L867.30,580.91 L867.80,580.71 L868.30,580.52 L868.80,580.34 L869.30,580.16 L869.80,579.99 L870.30,579.83 L870.80,579.68 L871.30,579.53 L871.80,579.40 L872.30,579.27 L872.80,579.16 L873.30,579.06 L873.80,578.97 L874.30,578.89 L874.80,578.82 L875.30,578.76 L875.80,578.71 L876.30,578.67 L876.80,578.63 L877.30,578.59 L877.80,578.55 L878.30,578.52 L878.80,578.48 L879.30,578.43 L879.80,578.39 L880.30,578.33 L880.80,578.26 L881.30,578.19 L881.80,578.10 L882.30,578.00 L882.80,577.89 L883.30,577.76 L883.80,577.60 L884.30,577.43 L884.80,577.24 L885.30,577.03 L885.80,576.79 L886.30,576.53 L886.80,576.26 L887.30,575.97 L887.80,575.68 L888.30,575.37 L888.80,575.06 L889.30,574.76 L889.80,574.45 L890.30,574.15 L890.80,573.85 L891.30,573.57 L891.80,573.30 L892.30,573.04 L892.80,572.81 L893.30,572.59 L893.80,572.39 L894.30,572.20 L894.80,572.02 L895.30,571.84 L895.80,571.67 L896.30,571.49 L896.80,571.30 L897.30,571.10 L897.80,570.89 L898.30,570.66 L898.80,570.41 L899.30,570.16 L899.80,569.89 L900.30,569.61 L900.80,569.32 L901.30,569.02 L901.80,568.71 L902.30,568.39 L902.80,568.07 L903.30,567.74 L903.80,567.40 L904.30,567.07 L904.80,566.73 L905.30,566.38 L905.80,566.04 L906.30,565.70 L906.80,565.35 L907.30,565.01 L907.80,564.68 L908.30,564.34 L908.80,564.01 L909.30,563.69 L909.80,563.37 L910.30,563.07 L910.80,562.77 L911.30,562.48 L911.80,562.20 L912.30,561.93 L912.80,561.67 L913.30,561.43 L913.80,561.21 L914.30,560.99 L914.80,560.80 L915.30,560.62 L915.80,560.46 L916.30,560.32 L916.80,560.20 L917.30,560.10 L917.80,560.02 L918.30,559.96 L918.80,559.91 L919.30,559.88 L919.80,559.88 L920.30,559.88 L920.80,559.91 L921.30,559.95 L921.80,560.00 L922.30,560.07 L922.80,560.16 L923.30,560.26 L923.80,560.38 L924.30,560.50 L924.80,560.64 L925.30,560.80 L925.80,560.96 L926.30,561.14 L926.80,561.33 L927.30,561.53 L927.80,561.74 L928.30,561.96 L928.80,562.20 L929.30,562.45 L929.80,562.71 L930.30,562.99 L930.80,563.29 L931.30,563.61 L931.80,563.95 L932.30,564.31 L932.80,564.69 L933.30,565.09 L933.80,565.51 L934.30,565.95 L934.80,566.39 L935.30,566.84 L935.80,567.29 L936.30,567.74 L936.80,568.18 L937.30,568.62 L937.80,569.04 L938.30,569.45 L938.80,569.84 L939.30,570.20 L939.80,570.54 L940.30,570.85 L940.80,571.13 L941.30,571.38 L941.80,571.61 L942.30,571.83 L942.80,572.03 L943.30,572.22 L943.80,572.40 L944.30,572.58 L944.80,572.75 L945.30,572.94 L945.80,573.13 L946.30,573.33 L946.80,573.55 L947.30,573.79 L947.80,574.06 L948.30,574.34 L948.80,574.64 L949.30,574.96 L949.80,575.30 L950.30,575.64 L950.80,576.00 L951.30,576.36 L951.80,576.72 L952.30,577.08 L952.80,577.44 L953.30,577.80 L953.80,578.14 L954.30,578.48 L954.80,578.80 L955.30,579.11 L955.80,579.40 L956.30,579.68 L956.80,579.94 L957.30,580.18 L957.80,580.42 L958.30,580.64 L958.80,580.85 L959.30,581.04 L959.80,581.23 L960.30,581.41 L960.80,581.58 L961.30,581.75 L961.80,581.91 L962.30,582.06 L962.80,582.21 L963.30,582.35 L963.80,582.49 L964.30,582.62 L964.80,582.75 L965.30,582.88 L965.80,583.00 L966.30,583.12 L966.80,583.23 L967.30,583.34 L967.80,583.44 L968.30,583.54 L968.80,583.64 L969.30,583.73 L969.80,583.82 L970.30,583.90 L970.80,583.98 L971.30,584.06 L971.80,584.13 L972.30,584.20 L972.80,584.27 L973.30,584.33 L973.80,584.39 L974.30,584.44 L974.80,584.49 L975.30,584.54 L975.80,584.58 L976.30,584.62 L976.80,584.66 L977.30,584.69 L977.80,584.72 L978.30,584.75 L978.80,584.77 L979.30,584.79 L979.80,584.81 L980.30,584.82 L980.80,584.83 L981.30,584.84 L981.80,584.84 L982.30,584.84 L982.80,584.84 L983.30,584.84 L983.80,584.83 L984.30,584.82 L984.80,584.80 L985.30,584.79 L985.80,584.77 L986.30,584.75 L986.80,584.72 L987.30,584.70 L987.80,584.67 L988.30,584.64 L988.80,584.60 L989.30,584.56 L989.80,584.53 L990.30,584.48 L990.80,584.44 L991.30,584.39 L991.80,584.34 L992.30,584.29 L992.80,584.24 L993.30,584.19 L993.80,584.13 L994.30,584.07 L994.80,584.01 L995.30,583.94 L995.80,583.88 L996.30,583.81 L996.80,583.74 L997.30,583.67 L997.80,583.60 L998.30,583.52 L998.80,583.45 L999.30,583.37 L999.80,583.29 L1000.30,583.21 L1000.80,583.13 L1001.30,583.04 L1001.80,582.96 L1002.30,582.87 L1002.80,582.78 L1003.30,582.69 L1003.80,582.60 L1004.30,582.51 L1004.80,582.41 L1005.30,582.32 L1005.80,582.22 L1006.30,582.13 L1006.80,582.03 L1007.30,581.93 L1007.80,581.83 L1008.30,581.73 L1008.80,581.62 L1009.30,581.52 L1009.80,581.42 L1010.30,581.31 L1010.80,581.21 L1011.30,581.10 L1011.80,580.99 L1012.30,580.89 L1012.80,580.78 L1013.30,580.67 L1013.80,580.56 L1014.30,580.45 L1014.80,580.34 L1015.30,580.23 L1015.80,580.12 L1016.30,580.00 L1016.80,579.89 L1017.30,579.78 L1017.80,579.67 L1018.30,579.55 L1018.80,579.44 L1019.30,579.33 L1019.80,579.22 L1020.30,579.10 L1020.80,578.99 L1021.30,578.88 L1021.80,578.76 L1022.30,578.65 L1022.80,578.54 L1023.30,578.43 L1023.80,578.31 L1024.30,578.20 L1024.80,578.09 L1025.30,577.98 L1025.80,577.87 L1026.30,577.76 L1026.80,577.65 L1027.30,577.54 L1027.80,577.43 L1028.30,577.32 L1028.80,577.21 L1029.30,577.11 L1029.80,577.00 L1030.30,576.90 L1030.80,576.79 L1031.30,576.69 L1031.80,576.58 L1032.30,576.48 L1032.80,576.38 L1033.30,576.28 L1033.80,576.18 L1034.30,576.08 L1034.80,575.99 L1035.30,575.89 L1035.80,575.80 L1036.30,575.70 L1036.80,575.61 L1037.30,575.52 L1037.80,575.43 L1038.30,575.34 L1038.80,575.25 L1039.30,575.17 L1039.80,575.09 L1040.30,575.00 L1040.80,574.92 L1041.30,574.84 L1041.80,574.77" stroke="#0000c8" stroke-width="1.1" stroke-dasharray="3 3"/><path d="M385.80,608.66 L386.05,608.63 L386.30,608.60 L386.55,608.57 L386.80,608.55 L387.05,608.52 L387.30,608.49 L387.55,608.46 L387.80,608.43 L388.05,608.40 L388.30,608.37 L388.55,608.35 L388.80,608.32 L389.05,608.29 L389.30,608.26 L389.55,608.23 L389.80,608.20 L390.05,608.18 L390.30,608.15 L390.55,608.12 L390.80,608.09 L391.05,608.06 L391.30,608.03 L391.55,608.01 L391.80,607.98 L392.05,607.95 L392.30,607.92 L392.55,607.89 L392.80,607.87 L393.05,607.84 L393.30,607.81 L393.55,607.78 L393.80,607.75 L394.05,607.73 L394.30,607.70 L394.55,607.67 L394.80,607.64 L395.05,607.61 L395.30,607.59 L395.55,607.56 L395.80,607.53 L396.05,607.50 L396.30,607.48 L396.55,607.45 L396.80,607.42 L397.05,607.39 L397.30,607.36 L397.55,607.34 L397.80,607.31 L398.05,607.28 L398.30,607.25 L398.55,607.23 L398.80,607.20 L399.05,607.17 L399.30,607.14 L399.55,607.12 L399.80,607.09 L400.05,607.06 L400.30,607.03 L400.55,607.01 L400.80,606.98 L401.05,606.95 L401.30,606.92 L401.55,606.90 L401.80,606.87 L402.05,606.84 L402.30,606.82 L402.55,606.79 L402.80,606.76 L403.05,606.73 L403.30,606.71 L403.55,606.68 L403.80,606.65 L404.05,606.62 L404.30,606.60 L404.55,606.57 L404.80,606.54 L405.05,606.52 L405.30,606.49 L405.55,606.46 L405.80,606.43 L406.05,606.41 L406.30,606.38 L406.55,606.35 L406.80,606.33 L407.05,606.30 L407.30,606.27 L407.55,606.25 L407.80,606.22 L408.05,606.19 L408.30,606.16 L408.55,606.14 L408.80,606.11 L409.05,606.08 L409.30,606.06 L409.55,606.03 L409.80,606.00 L410.05,605.98 L410.30,605.95 L410.55,605.92 L410.80,605.90 L411.05,605.87 L411.30,605.84 L411.55,605.82 L411.80,605.79 L412.05,605.76 L412.30,605.74 L412.55,605.71 L412.80,605.68 L413.05,605.66 L413.30,605.63 L413.55,605.60 L413.80,605.58 L414.05,605.55 L414.30,605.52 L414.55,605.50 L414.80,605.47 L415.05,605.44 L415.30,605.42 L415.55,605.39 L415.80,605.36 L416.05,605.34 L416.30,605.31 L416.55,605.28 L416.80,605.26 L417.05,605.23 L417.30,605.20 L417.55,605.18 L417.80,605.15 L418.05,605.12 L418.30,605.10 L418.55,605.07 L418.80,605.04 L419.05,605.02 L419.30,604.99 L419.55,604.96 L419.80,604.94 L420.05,604.91 L420.30,604.88 L420.55,604.86 L420.80,604.83 L421.05,604.80 L421.30,604.78 L421.55,604.75 L421.80,604.73 L422.05,604.70 L422.30,604.67 L422.55,604.65 L422.80,604.62 L423.05,604.59 L423.30,604.57 L423.55,604.54 L423.80,604.51 L424.05,604.49 L424.30,604.46 L424.55,604.44 L424.80,604.41 L425.05,604.38 L425.30,604.36 L425.55,604.33 L425.80,604.30 L426.05,604.28 L426.30,604.25 L426.55,604.22 L426.80,604.20 L427.05,604.17 L427.30,604.14 L427.55,604.12 L427.80,604.09 L428.05,604.07 L428.30,604.04 L428.55,604.01 L428.80,603.99 L429.05,603.96 L429.30,603.93 L429.55,603.91 L429.80,603.88 L430.05,603.86 L430.30,603.83 L430.55,603.80 L430.80,603.78 L431.05,603.75 L431.30,603.72 L431.55,603.70 L431.80,603.67 L432.05,603.64 L432.30,603.62 L432.55,603.59 L432.80,603.57 L433.05,603.54 L433.30,603.51 L433.55,603.49 L433.80,603.46 L434.05,603.43 L434.30,603.41 L434.55,603.38 L434.80,603.35 L435.05,603.33 L435.30,603.30 L435.55,603.28 L435.80,603.25 L436.05,603.22 L436.30,603.20 L436.55,603.17 L436.80,603.14 L437.05,603.12 L437.30,603.09 L437.55,603.06 L437.80,603.04 L438.05,603.01 L438.30,602.99 L438.55,602.96 L438.80,602.93 L439.05,602.91 L439.30,602.88 L439.55,602.85 L439.80,602.83 L440.05,602.80 L440.30,602.77 L440.55,602.75 L440.80,602.72 L441.05,602.69 L441.30,602.67 L441.55,602.64 L441.80,602.61 L442.05,602.59 L442.30,602.56 L442.55,602.54 L442.80,602.51 L443.05,602.48 L443.30,602.46 L443.55,602.43 L443.80,602.40 L444.05,602.38 L444.30,602.35 L444.55,602.32 L444.80,602.30 L445.05,602.27 L445.30,602.24 L445.55,602.22 L445.80,602.19 L446.05,602.16 L446.30,602.14 L446.55,602.11 L446.80,602.08 L447.05,602.06 L447.30,602.03 L447.55,602.00 L447.80,601.98 L448.05,601.95 L448.30,601.92 L448.55,601.90 L448.80,601.87 L449.05,601.84 L449.30,601.82 L449.55,601.79 L449.80,601.76 L450.05,601.74 L450.30,601.71 L450.55,601.68 L450.80,601.66 L451.05,601.63 L451.30,601.60 L451.55,601.58 L451.80,601.55 L452.05,601.52 L452.30,601.49 L452.55,601.47 L452.80,601.44 L453.05,601.41 L453.30,601.39 L453.55,601.36 L453.80,601.33 L454.05,601.31 L454.30,601.28 L454.55,601.25 L454.80,601.23 L455.05,601.20 L455.30,601.17 L455.55,601.14 L455.80,601.12 L456.05,601.09 L456.30,601.06 L456.55,601.04 L456.80,601.01 L457.05,600.98 L457.30,600.95 L457.55,600.93 L457.80,600.90 L458.05,600.87 L458.30,600.85 L458.55,600.82 L458.80,600.79 L459.05,600.76 L459.30,600.74 L459.55,600.71 L459.80,600.68 L460.05,600.65 L460.30,600.63 L460.55,600.60 L460.80,600.57 L461.05,600.54 L461.30,600.52 L461.55,600.49 L461.80,600.46 L462.05,600.43 L462.30,600.41 L462.55,600.38 L462.80,600.35 L463.05,600.32 L463.30,600.30 L463.55,600.27 L463.80,600.24 L464.05,600.21 L464.30,600.19 L464.55,600.16 L464.80,600.13 L465.05,600.10 L465.30,600.08 L465.55,600.05 L465.80,600.02 L466.05,599.99 L466.30,599.96 L466.55,599.94 L466.80,599.91 L467.05,599.88 L467.30,599.85 L467.55,599.82 L467.80,599.80 L468.05,599.77 L468.30,599.74 L468.55,599.71 L468.80,599.68 L469.05,599.66 L469.30,599.63 L469.55,599.60 L469.80,599.57 L470.05,599.54 L470.30,599.52 L470.55,599.49 L470.80,599.46 L471.05,599.43 L471.30,599.40 L471.55,599.37 L471.80,599.35 L472.05,599.32 L472.30,599.29 L472.55,599.26 L472.80,599.23 L473.05,599.20 L473.30,599.18 L473.55,599.15 L473.80,599.12 L474.05,599.09 L474.30,599.06 L474.55,599.03 L474.80,599.00 L475.05,598.98 L475.30,598.95 L475.55,598.92 L475.80,598.89 L476.05,598.86 L476.30,598.83 L476.55,598.80 L476.80,598.77 L477.05,598.75 L477.30,598.72 L477.55,598.69 L477.80,598.66 L478.05,598.63 L478.30,598.60 L478.55,598.57 L478.80,598.54 L479.05,598.51 L479.30,598.49 L479.55,598.46 L479.80,598.43 L480.05,598.40 L480.30,598.37 L480.55,598.34 L480.80,598.31 L481.05,598.28 L481.30,598.25 L481.55,598.22 L481.80,598.19 L482.05,598.16 L482.30,598.13 L482.55,598.10 L482.80,598.07 L483.05,598.04 L483.30,598.02 L483.55,597.99 L483.80,597.96 L484.05,597.93 L484.30,597.90 L484.55,597.87 L484.80,597.84 L485.05,597.81 L485.30,597.78 L485.55,597.75 L485.80,597.72 L486.05,597.69 L486.30,597.66 L486.55,597.63 L486.80,597.60 L487.05,597.57 L487.30,597.54 L487.55,597.51 L487.80,597.48 L488.05,597.45 L488.30,597.42 L488.55,597.39 L488.80,597.36 L489.05,597.33 L489.30,597.30 L489.55,597.27 L489.80,597.23 L490.05,597.20 L490.30,597.17 L490.55,597.14 L490.80,597.11 L491.05,597.08 L491.30,597.05 L491.55,597.02 L491.80,596.99 L492.05,596.96 L492.30,596.93 L492.55,596.90 L492.80,596.87 L493.05,596.84 L493.30,596.80 L493.55,596.77 L493.80,596.74 L494.05,596.71 L494.30,596.68 L494.55,596.65 L494.80,596.62 L495.05,596.59 L495.30,596.56 L495.55,596.52 L495.80,596.49 L496.05,596.46 L496.30,596.43 L496.55,596.40 L496.80,596.37 L497.05,596.34 L497.30,596.30 L497.55,596.27 L497.80,596.24 L498.05,596.21 L498.30,596.18 L498.55,596.15 L498.80,596.11 L499.05,596.08 L499.30,596.05 L499.55,596.02 L499.80,595.99 L500.05,595.96 L500.30,595.92 L500.55,595.89 L500.80,595.86 L501.05,595.83 L501.30,595.79 L501.55,595.76 L501.80,595.73 L502.05,595.70 L502.30,595.67 L502.55,595.63 L502.80,595.60 L503.05,595.57 L503.30,595.54 L503.55,595.50 L503.80,595.47 L504.05,595.44 L504.30,595.40 L504.55,595.37 L504.80,595.34 L505.05,595.31 L505.30,595.27 L505.55,595.24 L505.80,595.21 L506.05,595.17 L506.30,595.14 L506.55,595.11 L506.80,595.08 L507.05,595.04 L507.30,595.01 L507.55,594.98 L507.80,594.94 L508.05,594.91 L508.30,594.88 L508.55,594.84 L508.80,594.81 L509.05,594.78 L509.30,594.74 L509.55,594.71 L509.80,594.67 L510.05,594.64 L510.30,594.61 L510.55,594.57 L510.80,594.54 L511.05,594.51 L511.30,594.47 L511.55,594.44 L511.80,594.40 L512.05,594.37 L512.30,594.33 L512.55,594.30 L512.80,594.27 L513.05,594.23 L513.30,594.20 L513.55,594.16 L513.80,594.13 L514.05,594.09 L514.30,594.06 L514.55,594.03 L514.80,593.99 L515.05,593.96 L515.30,593.92 L515.55,593.89 L515.80,593.85 L516.05,593.82 L516.30,593.78 L516.55,593.75 L516.80,593.71 L517.05,593.68 L517.30,593.64 L517.55,593.61 L517.80,593.57 L518.05,593.54 L518.30,593.50 L518.55,593.46 L518.80,593.43 L519.05,593.39 L519.30,593.36 L519.55,593.32 L519.80,593.29 L520.05,593.25 L520.30,593.22 L520.55,593.18 L520.80,593.14 L521.05,593.11 L521.30,593.07 L521.55,593.04 L521.80,593.00 L522.05,592.96 L522.30,592.93 L522.55,592.89 L522.80,592.85 L523.05,592.82 L523.30,592.78 L523.55,592.75 L523.80,592.71 L524.05,592.67 L524.30,592.64 L524.55,592.60 L524.80,592.56 L525.05,592.53 L525.30,592.49 L525.55,592.45 L525.80,592.41 L526.05,592.38 L526.30,592.34 L526.55,592.30 L526.80,592.27 L527.05,592.23 L527.30,592.19 L527.55,592.15 L527.80,592.12 L528.05,592.08 L528.30,592.04 L528.55,592.00 L528.80,591.97 L529.05,591.93 L529.30,591.89 L529.55,591.85 L529.80,591.82 L530.05,591.78 L530.30,591.74 L530.55,591.70 L530.80,591.66 L531.05,591.62 L531.30,591.59 L531.55,591.55 L531.80,591.51 L532.05,591.47 L532.30,591.43 L532.55,591.39 L532.80,591.36 L533.05,591.32 L533.30,591.28 L533.55,591.24 L533.80,591.20 L534.05,591.16 L534.30,591.12 L534.55,591.08 L534.80,591.04 L535.05,591.00 L535.30,590.96 L535.55,590.92 L535.80,590.88 L536.05,590.84 L536.30,590.80 L536.55,590.76 L536.80,590.72 L537.05,590.68 L537.30,590.64 L537.55,590.60 L537.80,590.56 L538.05,590.52 L538.30,590.48 L538.55,590.44 L538.80,590.40 L539.05,590.36 L539.30,590.32 L539.55,590.27 L539.80,590.23 L540.05,590.19 L540.30,590.15 L540.55,590.11 L540.80,590.06 L541.05,590.02 L541.30,589.98 L541.55,589.94 L541.80,589.90 L542.05,589.85 L542.30,589.81 L542.55,589.77 L542.80,589.72 L543.05,589.68 L543.30,589.64 L543.55,589.59 L543.80,589.55 L544.05,589.51 L544.30,589.46 L544.55,589.42 L544.80,589.37 L545.05,589.33 L545.30,589.29 L545.55,589.24 L545.80,589.20 L546.05,589.15 L546.30,589.11 L546.55,589.06 L546.80,589.02 L547.05,588.97 L547.30,588.93 L547.55,588.88 L547.80,588.83 L548.05,588.79 L548.30,588.74 L548.55,588.69 L548.80,588.65 L549.05,588.60 L549.30,588.55 L549.55,588.51 L549.80,588.46 L550.05,588.41 L550.30,588.36 L550.55,588.32 L550.80,588.27 L551.05,588.22 L551.30,588.17 L551.55,588.12 L551.80,588.07 L552.05,588.03 L552.30,587.98 L552.55,587.93 L552.80,587.88 L553.05,587.83 L553.30,587.78 L553.55,587.73 L553.80,587.68 L554.05,587.63 L554.30,587.58 L554.55,587.53 L554.80,587.48 L555.05,587.42 L555.30,587.37 L555.55,587.32 L555.80,587.27 L556.05,587.22 L556.30,587.17 L556.55,587.11 L556.80,587.06 L557.05,587.01 L557.30,586.95 L557.55,586.90 L557.80,586.85 L558.05,586.79 L558.30,586.74 L558.55,586.69 L558.80,586.63 L559.05,586.58 L559.30,586.52 L559.55,586.47 L559.80,586.41 L560.05,586.36 L560.30,586.30 L560.55,586.25 L560.80,586.19 L561.05,586.13 L561.30,586.08 L561.55,586.02 L561.80,585.96 L562.05,585.91 L562.30,585.85 L562.55,585.79 L562.80,585.73 L563.05,585.67 L563.30,585.62 L563.55,585.56 L563.80,585.50 L564.05,585.44 L564.30,585.38 L564.55,585.32 L564.80,585.26 L565.05,585.20 L565.30,585.14 L565.55,585.08 L565.80,585.02 L566.05,584.96 L566.30,584.90 L566.55,584.83 L566.80,584.77 L567.05,584.71 L567.30,584.65 L567.55,584.58 L567.80,584.52 L568.05,584.46 L568.30,584.39 L568.55,584.33 L568.80,584.27 L569.05,584.20 L569.30,584.14 L569.55,584.07 L569.80,584.01 L570.05,583.94 L570.30,583.88 L570.55,583.81 L570.80,583.74 L571.05,583.68 L571.30,583.61 L571.55,583.54 L571.80,583.47 L572.05,583.41 L572.30,583.34 L572.55,583.27 L572.80,583.20 L573.05,583.13 L573.30,583.06 L573.55,582.99 L573.80,582.92 L574.05,582.85 L574.30,582.78 L574.55,582.71 L574.80,582.64 L575.05,582.57 L575.30,582.50 L575.55,582.43 L575.80,582.36 L576.05,582.28 L576.30,582.21 L576.55,582.14 L576.80,582.06 L577.05,581.99 L577.30,581.92 L577.55,581.84 L577.80,581.77 L578.05,581.69 L578.30,581.62 L578.55,581.54 L578.80,581.46 L579.05,581.39 L579.30,581.31 L579.55,581.23 L579.80,581.16 L580.05,581.08 L580.30,581.00 L580.55,580.92 L580.80,580.84 L581.05,580.76 L581.30,580.68 L581.55,580.61 L581.80,580.53 L582.05,580.44 L582.30,580.36 L582.55,580.28 L582.80,580.20 L583.05,580.12 L583.30,580.04 L583.55,579.96 L583.80,579.87 L584.05,579.79 L584.30,579.71 L584.55,579.62 L584.80,579.54 L585.05,579.45 L585.30,579.37 L585.55,579.28 L585.80,579.20 L586.05,579.11 L586.30,579.02 L586.55,578.94 L586.80,578.85 L587.05,578.76 L587.30,578.68 L587.55,578.59 L587.80,578.50 L588.05,578.41 L588.30,578.32 L588.55,578.23 L588.80,578.14 L589.05,578.05 L589.30,577.96 L589.55,577.87 L589.80,577.78 L590.05,577.68 L590.30,577.59 L590.55,577.50 L590.80,577.41 L591.05,577.31 L591.30,577.22 L591.55,577.12 L591.80,577.03 L592.05,576.93 L592.30,576.84 L592.55,576.74 L592.80,576.65 L593.05,576.55 L593.30,576.45 L593.55,576.35 L593.80,576.26 L594.05,576.16 L594.30,576.06 L594.55,575.96 L594.80,575.86 L595.05,575.76 L595.30,575.66 L595.55,575.56 L595.80,575.46 L596.05,575.36 L596.30,575.25 L596.55,575.15 L596.80,575.05 L597.05,574.95 L597.30,574.84 L597.55,574.74 L597.80,574.63 L598.05,574.53 L598.30,574.42 L598.55,574.32 L598.80,574.21 L599.05,574.10 L599.30,574.00 L599.55,573.89 L599.80,573.78 L600.05,573.67 L600.30,573.56 L600.55,573.45 L600.80,573.34 L601.05,573.23 L601.30,573.12 L601.55,573.01 L601.80,572.90 L602.05,572.79 L602.30,572.68 L602.55,572.56 L602.80,572.45 L603.05,572.34 L603.30,572.22 L603.55,572.11 L603.80,571.99 L604.05,571.88 L604.30,571.76 L604.55,571.64 L604.80,571.53 L605.05,571.41 L605.30,571.29 L605.55,571.17 L605.80,571.05 L606.05,570.93 L606.30,570.81 L606.55,570.69 L606.80,570.57 L607.05,570.45 L607.30,570.33 L607.55,570.21 L607.80,570.09 L608.05,569.96 L608.30,569.84 L608.55,569.71 L608.80,569.59 L609.05,569.46 L609.30,569.34 L609.55,569.21 L609.80,569.09 L610.05,568.96 L610.30,568.83 L610.55,568.70 L610.80,568.58 L611.05,568.45 L611.30,568.32 L611.55,568.19 L611.80,568.06 L612.05,567.92 L612.30,567.79 L612.55,567.66 L612.80,567.53 L613.05,567.40 L613.30,567.26 L613.55,567.13 L613.80,566.99 L614.05,566.86 L614.30,566.72 L614.55,566.59 L614.80,566.45 L615.05,566.31 L615.30,566.18 L615.55,566.04 L615.80,565.90 L616.05,565.76 L616.30,565.62 L616.55,565.48 L616.80,565.34 L617.05,565.20 L617.30,565.05 L617.55,564.91 L617.80,564.77 L618.05,564.63 L618.30,564.48 L618.55,564.34 L618.80,564.19 L619.05,564.05 L619.30,563.90 L619.55,563.75 L619.80,563.61 L620.05,563.46 L620.30,563.31 L620.55,563.16 L620.80,563.01 L621.05,562.86 L621.30,562.71 L621.55,562.56 L621.80,562.41 L622.05,562.26 L622.30,562.10 L622.55,561.95 L622.80,561.80 L623.05,561.64 L623.30,561.49 L623.55,561.33 L623.80,561.18 L624.05,561.02 L624.30,560.86 L624.55,560.70 L624.80,560.55 L625.05,560.39 L625.30,560.23 L625.55,560.07 L625.80,559.91 L626.05,559.75 L626.30,559.58 L626.55,559.42 L626.80,559.26 L627.05,559.09 L627.30,558.93 L627.55,558.77 L627.80,558.60 L628.05,558.43 L628.30,558.27 L628.55,558.10 L628.80,557.93 L629.05,557.77 L629.30,557.60 L629.55,557.43 L629.80,557.26 L630.05,557.09 L630.30,556.91 L630.55,556.74 L630.80,556.57 L631.05,556.40 L631.30,556.22 L631.55,556.05 L631.80,555.87 L632.05,555.70 L632.30,555.52 L632.55,555.35 L632.80,555.17 L633.05,554.99 L633.30,554.81 L633.55,554.63 L633.80,554.45 L634.05,554.27 L634.30,554.09 L634.55,553.91 L634.80,553.73 L635.05,553.55 L635.30,553.36 L635.55,553.18 L635.80,552.99 L636.05,552.81 L636.30,552.62 L636.55,552.44 L636.80,552.25 L637.05,552.06 L637.30,551.87 L637.55,551.68 L637.80,551.49 L638.05,551.30 L638.30,551.11 L638.55,550.92 L638.80,550.73 L639.05,550.53 L639.30,550.34 L639.55,550.15 L639.80,549.95 L640.05,549.76 L640.30,549.56 L640.55,549.36 L640.80,549.17 L641.05,548.97 L641.30,548.77 L641.55,548.57 L641.80,548.37 L642.05,548.17 L642.30,547.97 L642.55,547.76 L642.80,547.56 L643.05,547.36 L643.30,547.15 L643.55,546.95 L643.80,546.74 L644.05,546.54 L644.30,546.33 L644.55,546.12 L644.80,545.91 L645.05,545.71 L645.30,545.50 L645.55,545.29 L645.80,545.07 L646.05,544.86 L646.30,544.65 L646.55,544.44 L646.80,544.22 L647.05,544.01 L647.30,543.79 L647.55,543.58 L647.80,543.36 L648.05,543.15 L648.30,542.93 L648.55,542.71 L648.80,542.49 L649.05,542.27 L649.30,542.05 L649.55,541.83 L649.80,541.61 L650.05,541.38 L650.30,541.16 L650.55,540.94 L650.80,540.71 L651.05,540.48 L651.30,540.26 L651.55,540.03 L651.80,539.80 L652.05,539.57 L652.30,539.34 L652.55,539.11 L652.80,538.88 L653.05,538.64 L653.30,538.41 L653.55,538.18 L653.80,537.94 L654.05,537.70 L654.30,537.46 L654.55,537.22 L654.80,536.98 L655.05,536.74 L655.30,536.50 L655.55,536.26 L655.80,536.01 L656.05,535.76 L656.30,535.52 L656.55,535.27 L656.80,535.02 L657.05,534.77 L657.30,534.51 L657.55,534.26 L657.80,534.01 L658.05,533.75 L658.30,533.49 L658.55,533.23 L658.80,532.97 L659.05,532.71 L659.30,532.45 L659.55,532.18 L659.80,531.92 L660.05,531.65 L660.30,531.38 L660.55,531.11 L660.80,530.84 L661.05,530.57 L661.30,530.29 L661.55,530.01 L661.80,529.74 L662.05,529.46 L662.30,529.18 L662.55,528.89 L662.80,528.61 L663.05,528.32 L663.30,528.03 L663.55,527.74 L663.80,527.45 L664.05,527.16 L664.30,526.86 L664.55,526.57 L664.80,526.27 L665.05,525.97 L665.30,525.67 L665.55,525.36 L665.80,525.06 L666.05,524.75 L666.30,524.44 L666.55,524.13 L666.80,523.81 L667.05,523.50 L667.30,523.18 L667.55,522.86 L667.80,522.54 L668.05,522.22 L668.30,521.89 L668.55,521.57 L668.80,521.24 L669.05,520.90 L669.30,520.57 L669.55,520.23 L669.80,519.90 L670.05,519.56 L670.30,519.21 L670.55,518.87 L670.80,518.52 L671.05,518.17 L671.30,517.82 L671.55,517.47 L671.80,517.11 L672.05,516.76 L672.30,516.40 L672.55,516.03 L672.80,515.67 L673.05,515.30 L673.30,514.93 L673.55,514.56 L673.80,514.18 L674.05,513.81 L674.30,513.43 L674.55,513.05 L674.80,512.66 L675.05,512.27 L675.30,511.88 L675.55,511.49 L675.80,511.10 L676.05,510.70 L676.30,510.30 L676.55,509.90 L676.80,509.49 L677.05,509.09 L677.30,508.68 L677.55,508.26 L677.80,507.85 L678.05,507.43 L678.30,507.01 L678.55,506.58 L678.80,506.16 L679.05,505.73 L679.30,505.29 L679.55,504.86 L679.80,504.42 L680.05,503.98 L680.30,503.54 L680.55,503.09 L680.80,502.64 L681.05,502.19 L681.30,501.73 L681.55,501.27 L681.80,500.81 L682.05,500.35 L682.30,499.88 L682.55,499.41 L682.80,498.94 L683.05,498.46 L683.30,497.98 L683.55,497.50 L683.80,497.01 L684.05,496.52 L684.30,496.03 L684.55,495.53 L684.80,495.04 L685.05,494.53 L685.30,494.03 L685.55,493.52 L685.80,493.01 L686.05,492.49 L686.30,491.98 L686.55,491.45 L686.80,490.93 L687.05,490.40 L687.30,489.87 L687.55,489.34 L687.80,488.80 L688.05,488.26 L688.30,487.71 L688.55,487.16 L688.80,486.61 L689.05,486.05 L689.30,485.49 L689.55,484.93 L689.80,484.37 L690.05,483.80 L690.30,483.22 L690.55,482.65 L690.80,482.07 L691.05,481.48 L691.30,480.89 L691.55,480.30 L691.80,479.71 L692.05,479.11 L692.30,478.50 L692.55,477.90 L692.80,477.29 L693.05,476.67 L693.30,476.06 L693.55,475.44 L693.80,474.81 L694.05,474.18 L694.30,473.55 L694.55,472.91 L694.80,472.27 L695.05,471.63 L695.30,470.98 L695.55,470.32 L695.80,469.67 L696.05,469.01 L696.30,468.34 L696.55,467.67 L696.80,467.00 L697.05,466.32 L697.30,465.64 L697.55,464.96 L697.80,464.27 L698.05,463.58 L698.30,462.88 L698.55,462.18 L698.80,461.47 L699.05,460.76 L699.30,460.05 L699.55,459.33 L699.80,458.61 L700.05,457.88 L700.30,457.15 L700.55,456.42 L700.80,455.68 L701.05,454.93 L701.30,454.19 L701.55,453.43 L701.80,452.68 L702.05,451.92 L702.30,451.15 L702.55,450.39 L702.80,449.61 L703.05,448.84 L703.30,448.06 L703.55,447.27 L703.80,446.49 L704.05,445.69 L704.30,444.90 L704.55,444.10 L704.80,443.29 L705.05,442.49 L705.30,441.67 L705.55,440.86 L705.80,440.04 L706.05,439.21 L706.30,438.39 L706.55,437.55 L706.80,436.72 L707.05,435.88 L707.30,435.04 L707.55,434.19 L707.80,433.34 L708.05,432.48 L708.30,431.63 L708.55,430.76 L708.80,429.90 L709.05,429.03 L709.30,428.16 L709.55,427.28 L709.80,426.40 L710.05,425.51 L710.30,424.62 L710.55,423.73 L710.80,422.84 L711.05,421.94 L711.30,421.04 L711.55,420.13 L711.80,419.22 L712.05,418.31 L712.30,417.39 L712.55,416.47 L712.80,415.54 L713.05,414.62 L713.30,413.68 L713.55,412.75 L713.80,411.81 L714.05,410.87 L714.30,409.92 L714.55,408.97 L714.80,408.02 L715.05,407.07 L715.30,406.11 L715.55,405.14 L715.80,404.18 L716.05,403.21 L716.30,402.24 L716.55,401.26 L716.80,400.28 L717.05,399.30 L717.30,398.31 L717.55,397.32 L717.80,396.33 L718.05,395.33 L718.30,394.33 L718.55,393.33 L718.80,392.32 L719.05,391.31 L719.30,390.30 L719.55,389.29 L719.80,388.27 L720.05,387.24 L720.30,386.22 L720.55,385.19 L720.80,384.16 L721.05,383.12 L721.30,382.09 L721.55,381.05 L721.80,380.00 L722.05,378.95 L722.30,377.90 L722.55,376.85 L722.80,375.79 L723.05,374.73 L723.30,373.67 L723.55,372.61 L723.80,371.54 L724.05,370.47 L724.30,369.41 L724.55,368.34 L724.80,367.27 L725.05,366.20 L725.30,365.13 L725.55,364.06 L725.80,362.99 L726.05,361.93 L726.30,360.86 L726.55,359.80 L726.80,358.74 L727.05,357.69 L727.30,356.64 L727.55,355.59 L727.80,354.55 L728.05,353.51 L728.30,352.47 L728.55,351.45 L728.80,350.42 L729.05,349.41 L729.30,348.40 L729.55,347.40 L729.80,346.40 L730.05,345.42 L730.30,344.44 L730.55,343.47 L730.80,342.51 L731.05,341.56 L731.30,340.62 L731.55,339.69 L731.80,338.77 L732.05,337.86 L732.30,336.96 L732.55,336.07 L732.80,335.20 L733.05,334.34 L733.30,333.49 L733.55,332.65 L733.80,331.83 L734.05,331.02 L734.30,330.23 L734.55,329.45 L734.80,328.69 L735.05,327.94 L735.30,327.21 L735.55,326.50 L735.80,325.80 L736.05,325.12 L736.30,324.45 L736.55,323.81 L736.80,323.18 L737.05,322.57 L737.30,321.98 L737.55,321.42 L737.80,320.87 L738.05,320.34 L738.30,319.83 L738.55,319.34 L738.80,318.87 L739.05,318.43 L739.30,318.00 L739.55,317.59 L739.80,317.21 L740.05,316.84 L740.30,316.50 L740.55,316.17 L740.80,315.86 L741.05,315.58 L741.30,315.31 L741.55,315.07 L741.80,314.84 L742.05,314.63 L742.30,314.44 L742.55,314.27 L742.80,314.13 L743.05,314.00 L743.30,313.89 L743.55,313.79 L743.80,313.72 L744.05,313.67 L744.30,313.63 L744.55,313.62 L744.80,313.62 L745.05,313.64 L745.30,313.69 L745.55,313.74 L745.80,313.82 L746.05,313.92 L746.30,314.03 L746.55,314.17 L746.80,314.32 L747.05,314.49 L747.30,314.67 L747.55,314.88 L747.80,315.10 L748.05,315.35 L748.30,315.60 L748.55,315.88 L748.80,316.18 L749.05,316.49 L749.30,316.82 L749.55,317.17 L749.80,317.53 L750.05,317.91 L750.30,318.31 L750.55,318.73 L750.80,319.16 L751.05,319.61 L751.30,320.08 L751.55,320.56 L751.80,321.07 L752.05,321.58 L752.30,322.12 L752.55,322.67 L752.80,323.24 L753.05,323.82 L753.30,324.42 L753.55,325.04 L753.80,325.67 L754.05,326.32 L754.30,326.99 L754.55,327.67 L754.80,328.37 L755.05,329.08 L755.30,329.81 L755.55,330.55 L755.80,331.31 L756.05,332.08 L756.30,332.87 L756.55,333.67 L756.80,334.49 L757.05,335.32 L757.30,336.17 L757.55,337.03 L757.80,337.91 L758.05,338.80 L758.30,339.71 L758.55,340.63 L758.80,341.56 L759.05,342.51 L759.30,343.47 L759.55,344.44 L759.80,345.43 L760.05,346.43 L760.30,347.45 L760.55,348.47 L760.80,349.52 L761.05,350.57 L761.30,351.64 L761.55,352.72 L761.80,353.81 L762.05,354.92 L762.30,356.03 L762.55,357.16 L762.80,358.31 L763.05,359.46 L763.30,360.63 L763.55,361.81 L763.80,363.00 L764.05,364.20 L764.30,365.41 L764.55,366.64 L764.80,367.87 L765.05,369.12 L765.30,370.38 L765.55,371.65 L765.80,372.93 L766.05,374.22 L766.30,375.53 L766.55,376.84 L766.80,378.16 L767.05,379.49 L767.30,380.83 L767.55,382.17 L767.80,383.52 L768.05,384.87 L768.30,386.22 L768.55,387.56 L768.80,388.90 L769.05,390.24 L769.30,391.57 L769.55,392.90 L769.80,394.21 L770.05,395.51 L770.30,396.81 L770.55,398.08 L770.80,399.34 L771.05,400.59 L771.30,401.82 L771.55,403.04 L771.80,404.24 L772.05,405.44 L772.30,406.62 L772.55,407.79 L772.80,408.95 L773.05,410.10 L773.30,411.24 L773.55,412.38 L773.80,413.51 L774.05,414.63 L774.30,415.74 L774.55,416.85 L774.80,417.95 L775.05,419.05 L775.30,420.15 L775.55,421.24 L775.80,422.33 L776.05,423.42 L776.30,424.50 L776.55,425.58 L776.80,426.66 L777.05,427.73 L777.30,428.80 L777.55,429.87 L777.80,430.94 L778.05,432.00 L778.30,433.05 L778.55,434.11 L778.80,435.16 L779.05,436.20 L779.30,437.25 L779.55,438.28 L779.80,439.32 L780.05,440.35 L780.30,441.37 L780.55,442.40 L780.80,443.41 L781.05,444.43 L781.30,445.43 L781.55,446.44 L781.80,447.44 L782.05,448.43 L782.30,449.42 L782.55,450.41 L782.80,451.39 L783.05,452.37 L783.30,453.34 L783.55,454.30 L783.80,455.26 L784.05,456.22 L784.30,457.17 L784.55,458.12 L784.80,459.05 L785.05,459.99 L785.30,460.92 L785.55,461.84 L785.80,462.76 L786.05,463.67 L786.30,464.58 L786.55,465.48 L786.80,466.37 L787.05,467.26 L787.30,468.14 L787.55,469.02 L787.80,469.89 L788.05,470.75 L788.30,471.61 L788.55,472.46 L788.80,473.31 L789.05,474.14 L789.30,474.98 L789.55,475.80 L789.80,476.62 L790.05,477.43 L790.30,478.24 L790.55,479.03 L790.80,479.83 L791.05,480.61 L791.30,481.39 L791.55,482.16 L791.80,482.93 L792.05,483.69 L792.30,484.44 L792.55,485.19 L792.80,485.93 L793.05,486.67 L793.30,487.40 L793.55,488.12 L793.80,488.84 L794.05,489.55 L794.30,490.26 L794.55,490.96 L794.80,491.65 L795.05,492.34 L795.30,493.03 L795.55,493.70 L795.80,494.37 L796.05,495.04 L796.30,495.70 L796.55,496.36 L796.80,497.01 L797.05,497.65 L797.30,498.29 L797.55,498.93 L797.80,499.55 L798.05,500.18 L798.30,500.80 L798.55,501.41 L798.80,502.02 L799.05,502.62 L799.30,503.22 L799.55,503.81 L799.80,504.40 L800.05,504.99 L800.30,505.57 L800.55,506.14 L800.80,506.71 L801.05,507.28 L801.30,507.84 L801.55,508.39 L801.80,508.95 L802.05,509.49 L802.30,510.04 L802.55,510.57 L802.80,511.11 L803.05,511.64 L803.30,512.16 L803.55,512.69 L803.80,513.20 L804.05,513.72 L804.30,514.23 L804.55,514.73 L804.80,515.23 L805.05,515.73 L805.30,516.22 L805.55,516.71 L805.80,517.20 L806.05,517.68 L806.30,518.16 L806.55,518.63 L806.80,519.11 L807.05,519.57 L807.30,520.04 L807.55,520.50 L807.80,520.96 L808.05,521.41 L808.30,521.86 L808.55,522.31 L808.80,522.75 L809.05,523.20 L809.30,523.63 L809.55,524.07 L809.80,524.50 L810.05,524.93 L810.30,525.36 L810.55,525.78 L810.80,526.20 L811.05,526.62 L811.30,527.03 L811.55,527.44 L811.80,527.85 L812.05,528.26 L812.30,528.66 L812.55,529.06 L812.80,529.46 L813.05,529.86 L813.30,530.25 L813.55,530.65 L813.80,531.04 L814.05,531.42 L814.30,531.81 L814.55,532.19 L814.80,532.57 L815.05,532.95 L815.30,533.33 L815.55,533.70 L815.80,534.07 L816.05,534.44 L816.30,534.81 L816.55,535.18 L816.80,535.55 L817.05,535.91 L817.30,536.27 L817.55,536.63 L817.80,536.99 L818.05,537.35 L818.30,537.70 L818.55,538.06 L818.80,538.41 L819.05,538.76 L819.30,539.11 L819.55,539.46 L819.80,539.80 L820.05,540.15 L820.30,540.49 L820.55,540.83 L820.80,541.17 L821.05,541.51 L821.30,541.85 L821.55,542.18 L821.80,542.52 L822.05,542.85 L822.30,543.18 L822.55,543.51 L822.80,543.84 L823.05,544.16 L823.30,544.49 L823.55,544.81 L823.80,545.13 L824.05,545.45 L824.30,545.77 L824.55,546.09 L824.80,546.41 L825.05,546.72 L825.30,547.03 L825.55,547.34 L825.80,547.65 L826.05,547.96 L826.30,548.27 L826.55,548.58 L826.80,548.88 L827.05,549.18 L827.30,549.48 L827.55,549.78 L827.80,550.08 L828.05,550.38 L828.30,550.67 L828.55,550.97 L828.80,551.26 L829.05,551.55 L829.30,551.84 L829.55,552.13 L829.80,552.42 L830.05,552.70 L830.30,552.99 L830.55,553.27 L830.80,553.55 L831.05,553.83 L831.30,554.11 L831.55,554.39 L831.80,554.66 L832.05,554.94 L832.30,555.21 L832.55,555.48 L832.80,555.75 L833.05,556.02 L833.30,556.29 L833.55,556.56 L833.80,556.82 L834.05,557.09 L834.30,557.35 L834.55,557.61 L834.80,557.87 L835.05,558.13 L835.30,558.38 L835.55,558.64 L835.80,558.89 L836.05,559.15 L836.30,559.40 L836.55,559.65 L836.80,559.90 L837.05,560.15 L837.30,560.39 L837.55,560.64 L837.80,560.88 L838.05,561.13 L838.30,561.37 L838.55,561.61 L838.80,561.85 L839.05,562.08 L839.30,562.32 L839.55,562.55 L839.80,562.79 L840.05,563.02 L840.30,563.25 L840.55,563.48 L840.80,563.71 L841.05,563.94 L841.30,564.16 L841.55,564.39 L841.80,564.61 L842.05,564.83 L842.30,565.06 L842.55,565.28 L842.80,565.50 L843.05,565.71 L843.30,565.93 L843.55,566.14 L843.80,566.36 L844.05,566.57 L844.30,566.78 L844.55,566.99 L844.80,567.20 L845.05,567.41 L845.30,567.62 L845.55,567.82 L845.80,568.03 L846.05,568.23 L846.30,568.43 L846.55,568.63 L846.80,568.83 L847.05,569.03 L847.30,569.23 L847.55,569.43 L847.80,569.62 L848.05,569.82 L848.30,570.01 L848.55,570.20 L848.80,570.39 L849.05,570.58 L849.30,570.77 L849.55,570.96 L849.80,571.14 L850.05,571.33 L850.30,571.51 L850.55,571.69 L850.80,571.88 L851.05,572.06 L851.30,572.24 L851.55,572.41 L851.80,572.59 L852.05,572.77 L852.30,572.94 L852.55,573.12 L852.80,573.29 L853.05,573.46 L853.30,573.63 L853.55,573.80 L853.80,573.97 L854.05,574.14 L854.30,574.31 L854.55,574.47 L854.80,574.64 L855.05,574.80 L855.30,574.96 L855.55,575.12 L855.80,575.28 L856.05,575.44 L856.30,575.60 L856.55,575.76 L856.80,575.91 L857.05,576.07 L857.30,576.22 L857.55,576.38 L857.80,576.53 L858.05,576.68 L858.30,576.83 L858.55,576.98 L858.80,577.13 L859.05,577.28 L859.30,577.42 L859.55,577.57 L859.80,577.71 L860.05,577.85 L860.30,578.00 L860.55,578.14 L860.80,578.28 L861.05,578.42 L861.30,578.56 L861.55,578.69 L861.80,578.83 L862.05,578.97 L862.30,579.10 L862.55,579.24 L862.80,579.37 L863.05,579.50 L863.30,579.63 L863.55,579.76 L863.80,579.89 L864.05,580.02 L864.30,580.15 L864.55,580.27 L864.80,580.40 L865.05,580.52 L865.30,580.65 L865.55,580.77 L865.80,580.89 L866.05,581.01 L866.30,581.13 L866.55,581.25 L866.80,581.37 L867.05,581.49 L867.30,581.61 L867.55,581.72 L867.80,581.84 L868.05,581.95 L868.30,582.06 L868.55,582.18 L868.80,582.29 L869.05,582.40 L869.30,582.51 L869.55,582.62 L869.80,582.73 L870.05,582.83 L870.30,582.94 L870.55,583.05 L870.80,583.15 L871.05,583.26 L871.30,583.36 L871.55,583.46 L871.80,583.56 L872.05,583.66 L872.30,583.76 L872.55,583.86 L872.80,583.96 L873.05,584.06 L873.30,584.16 L873.55,584.25 L873.80,584.35 L874.05,584.44 L874.30,584.54 L874.55,584.63 L874.80,584.72 L875.05,584.82 L875.30,584.91 L875.55,585.00 L875.80,585.09 L876.05,585.17 L876.30,585.26 L876.55,585.35 L876.80,585.44 L877.05,585.52 L877.30,585.61 L877.55,585.69 L877.80,585.78 L878.05,585.86 L878.30,585.94 L878.55,586.02 L878.80,586.10 L879.05,586.18 L879.30,586.26 L879.55,586.34 L879.80,586.42 L880.05,586.50 L880.30,586.57 L880.55,586.65 L880.80,586.72 L881.05,586.80 L881.30,586.87 L881.55,586.95 L881.80,587.02 L882.05,587.09 L882.30,587.16 L882.55,587.23 L882.80,587.30 L883.05,587.37 L883.30,587.44 L883.55,587.51 L883.80,587.58 L884.05,587.64 L884.30,587.71 L884.55,587.78 L884.80,587.84 L885.05,587.91 L885.30,587.97 L885.55,588.03 L885.80,588.09 L886.05,588.16 L886.30,588.22 L886.55,588.28 L886.80,588.34 L887.05,588.40 L887.30,588.46 L887.55,588.52 L887.80,588.57 L888.05,588.63 L888.30,588.69 L888.55,588.75 L888.80,588.80 L889.05,588.86 L889.30,588.91 L889.55,588.96 L889.80,589.02 L890.05,589.07 L890.30,589.12 L890.55,589.18 L890.80,589.23 L891.05,589.28 L891.30,589.33 L891.55,589.38 L891.80,589.43 L892.05,589.48 L892.30,589.52 L892.55,589.57 L892.80,589.62 L893.05,589.67 L893.30,589.71 L893.55,589.76 L893.80,589.80 L894.05,589.85 L894.30,589.89 L894.55,589.94 L894.80,589.98 L895.05,590.02 L895.30,590.07 L895.55,590.11 L895.80,590.15 L896.05,590.19 L896.30,590.23 L896.55,590.27 L896.80,590.31 L897.05,590.35 L897.30,590.39 L897.55,590.43 L897.80,590.47 L898.05,590.50 L898.30,590.54 L898.55,590.58 L898.80,590.61 L899.05,590.65 L899.30,590.69 L899.55,590.72 L899.80,590.76 L900.05,590.79 L900.30,590.82 L900.55,590.86 L900.80,590.89 L901.05,590.92 L901.30,590.96 L901.55,590.99 L901.80,591.02 L902.05,591.05 L902.30,591.08 L902.55,591.11 L902.80,591.14 L903.05,591.17 L903.30,591.20 L903.55,591.23 L903.80,591.26 L904.05,591.29 L904.30,591.32 L904.55,591.35 L904.80,591.37 L905.05,591.40 L905.30,591.43 L905.55,591.45 L905.80,591.48 L906.05,591.51 L906.30,591.53 L906.55,591.56 L906.80,591.58 L907.05,591.61 L907.30,591.63 L907.55,591.66 L907.80,591.68 L908.05,591.70 L908.30,591.73 L908.55,591.75 L908.80,591.77 L909.05,591.79 L909.30,591.82 L909.55,591.84 L909.80,591.86 L910.05,591.88 L910.30,591.90 L910.55,591.92 L910.80,591.95 L911.05,591.97 L911.30,591.99 L911.55,592.01 L911.80,592.03 L912.05,592.05 L912.30,592.07 L912.55,592.08 L912.80,592.10 L913.05,592.12 L913.30,592.14 L913.55,592.16 L913.80,592.18 L914.05,592.20 L914.30,592.21 L914.55,592.23 L914.80,592.25 L915.05,592.27 L915.30,592.28 L915.55,592.30 L915.80,592.32 L916.05,592.33 L916.30,592.35 L916.55,592.36 L916.80,592.38 L917.05,592.39 L917.30,592.41 L917.55,592.43 L917.80,592.44 L918.05,592.45 L918.30,592.47 L918.55,592.48 L918.80,592.50 L919.05,592.51 L919.30,592.52 L919.55,592.54 L919.80,592.55 L920.05,592.56 L920.30,592.58 L920.55,592.59 L920.80,592.60 L921.05,592.61 L921.30,592.63 L921.55,592.64 L921.80,592.65 L922.05,592.66 L922.30,592.67 L922.55,592.68 L922.80,592.69 L923.05,592.70 L923.30,592.71 L923.55,592.72 L923.80,592.73 L924.05,592.74 L924.30,592.75 L924.55,592.76 L924.80,592.77 L925.05,592.78 L925.30,592.79 L925.55,592.80 L925.80,592.80 L926.05,592.81 L926.30,592.82 L926.55,592.83 L926.80,592.83 L927.05,592.84 L927.30,592.85 L927.55,592.85 L927.80,592.86 L928.05,592.87 L928.30,592.87 L928.55,592.88 L928.80,592.88 L929.05,592.89 L929.30,592.89 L929.55,592.90 L929.80,592.90 L930.05,592.91 L930.30,592.91 L930.55,592.92 L930.80,592.92 L931.05,592.93 L931.30,592.93 L931.55,592.93 L931.80,592.94 L932.05,592.94 L932.30,592.94 L932.55,592.94 L932.80,592.95 L933.05,592.95 L933.30,592.95 L933.55,592.95 L933.80,592.95 L934.05,592.95 L934.30,592.96 L934.55,592.96 L934.80,592.96 L935.05,592.96 L935.30,592.96 L935.55,592.96 L935.80,592.96 L936.05,592.96 L936.30,592.96 L936.55,592.96 L936.80,592.96 L937.05,592.95 L937.30,592.95 L937.55,592.95 L937.80,592.95 L938.05,592.95 L938.30,592.95 L938.55,592.94 L938.80,592.94 L939.05,592.94 L939.30,592.93 L939.55,592.93 L939.80,592.93 L940.05,592.92 L940.30,592.92 L940.55,592.92 L940.80,592.91 L941.05,592.91 L941.30,592.90 L941.55,592.90 L941.80,592.89 L942.05,592.89 L942.30,592.88 L942.55,592.88 L942.80,592.87 L943.05,592.86 L943.30,592.86 L943.55,592.85 L943.80,592.85 L944.05,592.84 L944.30,592.83 L944.55,592.82 L944.80,592.82 L945.05,592.81 L945.30,592.80 L945.55,592.79 L945.80,592.78 L946.05,592.78 L946.30,592.77 L946.55,592.76 L946.80,592.75 L947.05,592.74 L947.30,592.73 L947.55,592.72 L947.80,592.71 L948.05,592.70 L948.30,592.69 L948.55,592.68 L948.80,592.67 L949.05,592.66 L949.30,592.65 L949.55,592.64 L949.80,592.62 L950.05,592.61 L950.30,592.60 L950.55,592.59 L950.80,592.58 L951.05,592.56 L951.30,592.55 L951.55,592.54 L951.80,592.52 L952.05,592.51 L952.30,592.50 L952.55,592.48 L952.80,592.47 L953.05,592.46 L953.30,592.44 L953.55,592.43 L953.80,592.41 L954.05,592.40 L954.30,592.38 L954.55,592.37 L954.80,592.35 L955.05,592.34 L955.30,592.32 L955.55,592.30 L955.80,592.29 L956.05,592.27 L956.30,592.25 L956.55,592.24 L956.80,592.22 L957.05,592.20 L957.30,592.19 L957.55,592.17 L957.80,592.15 L958.05,592.13 L958.30,592.11 L958.55,592.09 L958.80,592.08 L959.05,592.06 L959.30,592.04 L959.55,592.02 L959.80,592.00 L960.05,591.98 L960.30,591.96 L960.55,591.94 L960.80,591.92 L961.05,591.90 L961.30,591.88 L961.55,591.86 L961.80,591.84 L962.05,591.81 L962.30,591.79 L962.55,591.77 L962.80,591.75 L963.05,591.73 L963.30,591.70 L963.55,591.68 L963.80,591.66 L964.05,591.64 L964.30,591.61 L964.55,591.59 L964.80,591.57 L965.05,591.54 L965.30,591.52 L965.55,591.50 L965.80,591.47 L966.05,591.45 L966.30,591.42 L966.55,591.40 L966.80,591.37 L967.05,591.35 L967.30,591.32 L967.55,591.30 L967.80,591.27 L968.05,591.24 L968.30,591.22 L968.55,591.19 L968.80,591.16 L969.05,591.14 L969.30,591.11 L969.55,591.08 L969.80,591.06 L970.05,591.03 L970.30,591.00 L970.55,590.97 L970.80,590.94 L971.05,590.92 L971.30,590.89 L971.55,590.86 L971.80,590.83 L972.05,590.80 L972.30,590.77 L972.55,590.74 L972.80,590.71 L973.05,590.68 L973.30,590.65 L973.55,590.62 L973.80,590.59 L974.05,590.56 L974.30,590.53 L974.55,590.50 L974.80,590.47 L975.05,590.44 L975.30,590.40 L975.55,590.37 L975.80,590.34 L976.05,590.31 L976.30,590.27 L976.55,590.24 L976.80,590.21 L977.05,590.18 L977.30,590.14 L977.55,590.11 L977.80,590.08 L978.05,590.04 L978.30,590.01 L978.55,589.97 L978.80,589.94 L979.05,589.90 L979.30,589.87 L979.55,589.83 L979.80,589.80 L980.05,589.76 L980.30,589.73 L980.55,589.69 L980.80,589.66 L981.05,589.62 L981.30,589.58 L981.55,589.55 L981.80,589.51 L982.05,589.47 L982.30,589.44 L982.55,589.40 L982.80,589.36 L983.05,589.32 L983.30,589.29 L983.55,589.25 L983.80,589.21 L984.05,589.17 L984.30,589.13 L984.55,589.09 L984.80,589.06 L985.05,589.02 L985.30,588.98 L985.55,588.94 L985.80,588.90 L986.05,588.86 L986.30,588.82 L986.55,588.78 L986.80,588.74 L987.05,588.70 L987.30,588.66 L987.55,588.61 L987.80,588.57 L988.05,588.53 L988.30,588.49 L988.55,588.45 L988.80,588.41 L989.05,588.36 L989.30,588.32 L989.55,588.28 L989.80,588.24 L990.05,588.19 L990.30,588.15 L990.55,588.11 L990.80,588.06 L991.05,588.02 L991.30,587.97 L991.55,587.93 L991.80,587.89 L992.05,587.84 L992.30,587.80 L992.55,587.75 L992.80,587.71 L993.05,587.66 L993.30,587.62 L993.55,587.57 L993.80,587.52 L994.05,587.48 L994.30,587.43 L994.55,587.39 L994.80,587.34 L995.05,587.29 L995.30,587.24 L995.55,587.20 L995.80,587.15 L996.05,587.10 L996.30,587.05 L996.55,587.01 L996.80,586.96 L997.05,586.91 L997.30,586.86 L997.55,586.81 L997.80,586.76 L998.05,586.72 L998.30,586.67 L998.55,586.62 L998.80,586.57 L999.05,586.52 L999.30,586.47 L999.55,586.42 L999.80,586.37 L1000.05,586.32 L1000.30,586.27 L1000.55,586.21 L1000.80,586.16 L1001.05,586.11 L1001.30,586.06 L1001.55,586.01 L1001.80,585.96 L1002.05,585.90 L1002.30,585.85 L1002.55,585.80 L1002.80,585.75 L1003.05,585.69 L1003.30,585.64 L1003.55,585.59 L1003.80,585.53 L1004.05,585.48 L1004.30,585.43 L1004.55,585.37 L1004.80,585.32 L1005.05,585.27 L1005.30,585.21 L1005.55,585.16 L1005.80,585.10 L1006.05,585.05 L1006.30,584.99 L1006.55,584.94 L1006.80,584.88 L1007.05,584.82 L1007.30,584.77 L1007.55,584.71 L1007.80,584.66 L1008.05,584.60 L1008.30,584.54 L1008.55,584.49 L1008.80,584.43 L1009.05,584.37 L1009.30,584.31 L1009.55,584.26 L1009.80,584.20 L1010.05,584.14 L1010.30,584.08 L1010.55,584.02 L1010.80,583.97 L1011.05,583.91 L1011.30,583.85 L1011.55,583.79 L1011.80,583.73 L1012.05,583.67 L1012.30,583.61 L1012.55,583.55 L1012.80,583.49 L1013.05,583.43 L1013.30,583.37 L1013.55,583.31 L1013.80,583.25 L1014.05,583.19 L1014.30,583.13 L1014.55,583.06 L1014.80,583.00 L1015.05,582.94 L1015.30,582.88 L1015.55,582.82 L1015.80,582.76 L1016.05,582.69 L1016.30,582.63 L1016.55,582.57 L1016.80,582.50 L1017.05,582.44 L1017.30,582.38 L1017.55,582.31 L1017.80,582.25 L1018.05,582.19 L1018.30,582.12 L1018.55,582.06 L1018.80,581.99 L1019.05,581.93 L1019.30,581.86 L1019.55,581.80 L1019.80,581.73 L1020.05,581.67 L1020.30,581.60 L1020.55,581.54 L1020.80,581.47 L1021.05,581.41 L1021.30,581.34 L1021.55,581.27 L1021.80,581.21 L1022.05,581.14 L1022.30,581.07 L1022.55,581.01 L1022.80,580.94 L1023.05,580.87 L1023.30,580.80 L1023.55,580.74 L1023.80,580.67 L1024.05,580.60 L1024.30,580.53 L1024.55,580.46 L1024.80,580.39 L1025.05,580.32 L1025.30,580.26 L1025.55,580.19 L1025.80,580.12 L1026.05,580.05 L1026.30,579.98 L1026.55,579.91 L1026.80,579.84 L1027.05,579.77 L1027.30,579.70 L1027.55,579.63 L1027.80,579.55 L1028.05,579.48 L1028.30,579.41 L1028.55,579.34 L1028.80,579.27 L1029.05,579.20 L1029.30,579.13 L1029.55,579.05 L1029.80,578.98 L1030.05,578.91 L1030.30,578.84 L1030.55,578.76 L1030.80,578.69 L1031.05,578.62 L1031.30,578.54 L1031.55,578.47 L1031.80,578.40 L1032.05,578.32 L1032.30,578.25 L1032.55,578.17 L1032.80,578.10 L1033.05,578.02 L1033.30,577.95 L1033.55,577.87 L1033.80,577.80 L1034.05,577.72 L1034.30,577.65 L1034.55,577.57 L1034.80,577.50 L1035.05,577.42 L1035.30,577.34 L1035.55,577.27 L1035.80,577.19 L1036.05,577.11 L1036.30,577.04 L1036.55,576.96 L1036.80,576.88 L1037.05,576.80 L1037.30,576.73 L1037.55,576.65 L1037.80,576.57 L1038.05,576.49 L1038.30,576.41 L1038.55,576.34 L1038.80,576.26 L1039.05,576.18 L1039.30,576.10 L1039.55,576.02 L1039.80,575.94 L1040.05,575.86 L1040.30,575.78 L1040.55,575.70 L1040.80,575.62 L1041.05,575.54 L1041.30,575.46 L1041.55,575.38 L1041.80,575.30" stroke="#0000c8" stroke-width="2"/></g><text x="972" y="224.5" font-family="Liberation Serif" font-size="17.5" font-weight="bold" fill="#a8a8a8" letter-spacing="0.35">LspLAB</text><text x="970" y="222.5" font-family="Liberation Serif" font-size="17.5" font-weight="bold" fill="#000" letter-spacing="0.35">LspLAB</text></svg>
<svg width="1121" height="723" style="position:absolute;left:0;top:0" shape-rendering="crispEdges"><rect x="3" y="3" width="510" height="436" fill="#d4d0c8"/><rect x="3" y="3" width="509" height="1" fill="#d4d0c8"/><rect x="3" y="3" width="1" height="435" fill="#d4d0c8"/><rect x="4" y="4" width="507" height="1" fill="#ffffff"/><rect x="4" y="4" width="1" height="433" fill="#ffffff"/><rect x="3" y="438" width="510" height="1" fill="#404040"/><rect x="512" y="3" width="1" height="436" fill="#404040"/><rect x="4" y="437" width="508" height="1" fill="#808080"/><rect x="511" y="4" width="1" height="434" fill="#808080"/><rect x="6" y="6" width="504" height="18" fill="#0a246a"/><rect x="492" y="8" width="16" height="14" fill="#d4d0c8"/><rect x="492" y="8" width="15" height="1" fill="#ffffff"/><rect x="492" y="8" width="1" height="13" fill="#ffffff"/><rect x="493" y="9" width="13" height="1" fill="#d4d0c8"/><rect x="493" y="9" width="1" height="11" fill="#d4d0c8"/><rect x="492" y="21" width="16" height="1" fill="#404040"/><rect x="507" y="8" width="1" height="14" fill="#404040"/><rect x="493" y="20" width="14" height="1" fill="#808080"/><rect x="506" y="9" width="1" height="12" fill="#808080"/><rect x="496" y="11" width="1" height="1" fill="#000"/><rect x="497" y="11" width="1" height="1" fill="#000"/><rect x="502" y="11" width="1" height="1" fill="#000"/><rect x="503" y="11" width="1" height="1" fill="#000"/><rect x="497" y="12" width="1" height="1" fill="#000"/><rect x="498" y="12" width="1" height="1" fill="#000"/><rect x="501" y="12" width="1" height="1" fill="#000"/><rect x="502" y="12" width="1" height="1" fill="#000"/><rect x="498" y="13" width="1" height="1" fill="#000"/><rect x="499" y="13" width="1" height="1" fill="#000"/><rect x="500" y="13" width="1" height="1" fill="#000"/><rect x="501" y="13" width="1" height="1" fill="#000"/><rect x="499" y="14" width="1" height="1" fill="#000"/><rect x="500" y="14" width="1" height="1" fill="#000"/><rect x="498" y="15" width="1" height="1" fill="#000"/><rect x="499" y="15" width="1" height="1" fill="#000"/><rect x="500" y="15" width="1" height="1" fill="#000"/><rect x="501" y="15" width="1" height="1" fill="#000"/><rect x="497" y="16" width="1" height="1" fill="#000"/><rect x="498" y="16" width="1" height="1" fill="#000"/><rect x="501" y="16" width="1" height="1" fill="#000"/><rect x="502" y="16" width="1" height="1" fill="#000"/><rect x="496" y="17" width="1" height="1" fill="#000"/><rect x="497" y="17" width="1" height="1" fill="#000"/><rect x="502" y="17" width="1" height="1" fill="#000"/><rect x="503" y="17" width="1" height="1" fill="#000"/><g shape-rendering="auto"><rect x="8" y="7" width="16" height="16" rx="2.5" fill="#ffff00"/><path d="M10,8.5 L22,8.5 L17.5,13 L14.5,13 Z" fill="#083850"/><path d="M13,9.5 L17,9.5 L16,12.5 L15,12.5 Z" fill="#30a8b8"/><path d="M17,10 L21,9 L17,13 Z" fill="#20a020"/><ellipse cx="15.5" cy="15" rx="4" ry="2" fill="#30a0b0"/><rect x="11" y="14" width="9" height="1.6" fill="#000"/><ellipse cx="16" cy="19.8" rx="6.2" ry="1.8" fill="#7a7a08"/></g><rect x="17" y="42" width="481" height="1" fill="#808080"/><rect x="17" y="42" width="1" height="205" fill="#808080"/><rect x="18" y="43" width="480" height="1" fill="#ffffff"/><rect x="18" y="43" width="1" height="204" fill="#ffffff"/><rect x="17" y="247" width="482" height="1" fill="#808080"/><rect x="498" y="42" width="1" height="206" fill="#808080"/><rect x="18" y="248" width="482" height="1" fill="#ffffff"/><rect x="499" y="43" width="1" height="206" fill="#ffffff"/><rect x="17" y="259" width="229" height="1" fill="#808080"/><rect x="17" y="259" width="1" height="129" fill="#808080"/><rect x="18" y="260" width="228" height="1" fill="#ffffff"/><rect x="18" y="260" width="1" height="128" fill="#ffffff"/><rect x="17" y="388" width="230" height="1" fill="#808080"/><rect x="246" y="259" width="1" height="130" fill="#808080"/><rect x="18" y="389" width="230" height="1" fill="#ffffff"/><rect x="247" y="260" width="1" height="130" fill="#ffffff"/><rect x="254" y="259" width="244" height="1" fill="#808080"/><rect x="254" y="259" width="1" height="129" fill="#808080"/><rect x="255" y="260" width="243" height="1" fill="#ffffff"/><rect x="255" y="260" width="1" height="128" fill="#ffffff"/><rect x="254" y="388" width="245" height="1" fill="#808080"/><rect x="498" y="259" width="1" height="130" fill="#808080"/><rect x="255" y="389" width="245" height="1" fill="#ffffff"/><rect x="499" y="260" width="1" height="130" fill="#ffffff"/><rect x="96" y="59" width="60" height="23" fill="#d4d0c8"/><rect x="96" y="59" width="59" height="1" fill="#808080"/><rect x="96" y="59" width="1" height="22" fill="#808080"/><rect x="97" y="60" width="57" height="1" fill="#404040"/><rect x="97" y="60" width="1" height="20" fill="#404040"/><rect x="96" y="81" width="60" height="1" fill="#ffffff"/><rect x="155" y="59" width="1" height="23" fill="#ffffff"/><rect x="97" y="80" width="58" height="1" fill="#d4d0c8"/><rect x="154" y="60" width="1" height="21" fill="#d4d0c8"/><rect x="266" y="58" width="60" height="23" fill="#d4d0c8"/><rect x="266" y="58" width="59" height="1" fill="#808080"/><rect x="266" y="58" width="1" height="22" fill="#808080"/><rect x="267" y="59" width="57" height="1" fill="#404040"/><rect x="267" y="59" width="1" height="20" fill="#404040"/><rect x="266" y="80" width="60" height="1" fill="#ffffff"/><rect x="325" y="58" width="1" height="23" fill="#ffffff"/><rect x="267" y="79" width="58" height="1" fill="#d4d0c8"/><rect x="324" y="59" width="1" height="21" fill="#d4d0c8"/><rect x="428" y="58" width="60" height="23" fill="#d4d0c8"/><rect x="428" y="58" width="59" height="1" fill="#808080"/><rect x="428" y="58" width="1" height="22" fill="#808080"/><rect x="429" y="59" width="57" height="1" fill="#404040"/><rect x="429" y="59" width="1" height="20" fill="#404040"/><rect x="428" y="80" width="60" height="1" fill="#ffffff"/><rect x="487" y="58" width="1" height="23" fill="#ffffff"/><rect x="429" y="79" width="58" height="1" fill="#d4d0c8"/><rect x="486" y="59" width="1" height="21" fill="#d4d0c8"/><rect x="96" y="85" width="60" height="23" fill="#d4d0c8"/><rect x="96" y="85" width="59" height="1" fill="#808080"/><rect x="96" y="85" width="1" height="22" fill="#808080"/><rect x="97" y="86" width="57" height="1" fill="#404040"/><rect x="97" y="86" width="1" height="20" fill="#404040"/><rect x="96" y="107" width="60" height="1" fill="#ffffff"/><rect x="155" y="85" width="1" height="23" fill="#ffffff"/><rect x="97" y="106" width="58" height="1" fill="#d4d0c8"/><rect x="154" y="86" width="1" height="21" fill="#d4d0c8"/><rect x="266" y="84" width="60" height="23" fill="#d4d0c8"/><rect x="266" y="84" width="59" height="1" fill="#808080"/><rect x="266" y="84" width="1" height="22" fill="#808080"/><rect x="267" y="85" width="57" height="1" fill="#404040"/><rect x="267" y="85" width="1" height="20" fill="#404040"/><rect x="266" y="106" width="60" height="1" fill="#ffffff"/><rect x="325" y="84" width="1" height="23" fill="#ffffff"/><rect x="267" y="105" width="58" height="1" fill="#d4d0c8"/><rect x="324" y="85" width="1" height="21" fill="#d4d0c8"/><rect x="428" y="84" width="60" height="23" fill="#d4d0c8"/><rect x="428" y="84" width="59" height="1" fill="#808080"/><rect x="428" y="84" width="1" height="22" fill="#808080"/><rect x="429" y="85" width="57" height="1" fill="#404040"/><rect x="429" y="85" width="1" height="20" fill="#404040"/><rect x="428" y="106" width="60" height="1" fill="#ffffff"/><rect x="487" y="84" width="1" height="23" fill="#ffffff"/><rect x="429" y="105" width="58" height="1" fill="#d4d0c8"/><rect x="486" y="85" width="1" height="21" fill="#d4d0c8"/><rect x="96" y="111" width="60" height="23" fill="#d4d0c8"/><rect x="96" y="111" width="59" height="1" fill="#808080"/><rect x="96" y="111" width="1" height="22" fill="#808080"/><rect x="97" y="112" width="57" height="1" fill="#404040"/><rect x="97" y="112" width="1" height="20" fill="#404040"/><rect x="96" y="133" width="60" height="1" fill="#ffffff"/><rect x="155" y="111" width="1" height="23" fill="#ffffff"/><rect x="97" y="132" width="58" height="1" fill="#d4d0c8"/><rect x="154" y="112" width="1" height="21" fill="#d4d0c8"/><rect x="266" y="110" width="60" height="23" fill="#d4d0c8"/><rect x="266" y="110" width="59" height="1" fill="#808080"/><rect x="266" y="110" width="1" height="22" fill="#808080"/><rect x="267" y="111" width="57" height="1" fill="#404040"/><rect x="267" y="111" width="1" height="20" fill="#404040"/><rect x="266" y="132" width="60" height="1" fill="#ffffff"/><rect x="325" y="110" width="1" height="23" fill="#ffffff"/><rect x="267" y="131" width="58" height="1" fill="#d4d0c8"/><rect x="324" y="111" width="1" height="21" fill="#d4d0c8"/><rect x="428" y="110" width="60" height="23" fill="#d4d0c8"/><rect x="428" y="110" width="59" height="1" fill="#808080"/><rect x="428" y="110" width="1" height="22" fill="#808080"/><rect x="429" y="111" width="57" height="1" fill="#404040"/><rect x="429" y="111" width="1" height="20" fill="#404040"/><rect x="428" y="132" width="60" height="1" fill="#ffffff"/><rect x="487" y="110" width="1" height="23" fill="#ffffff"/><rect x="429" y="131" width="58" height="1" fill="#d4d0c8"/><rect x="486" y="111" width="1" height="21" fill="#d4d0c8"/><rect x="96" y="137" width="60" height="23" fill="#d4d0c8"/><rect x="96" y="137" width="59" height="1" fill="#808080"/><rect x="96" y="137" width="1" height="22" fill="#808080"/><rect x="97" y="138" width="57" height="1" fill="#404040"/><rect x="97" y="138" width="1" height="20" fill="#404040"/><rect x="96" y="159" width="60" height="1" fill="#ffffff"/><rect x="155" y="137" width="1" height="23" fill="#ffffff"/><rect x="97" y="158" width="58" height="1" fill="#d4d0c8"/><rect x="154" y="138" width="1" height="21" fill="#d4d0c8"/><rect x="266" y="137" width="60" height="23" fill="#d4d0c8"/><rect x="266" y="137" width="59" height="1" fill="#808080"/><rect x="266" y="137" width="1" height="22" fill="#808080"/><rect x="267" y="138" width="57" height="1" fill="#404040"/><rect x="267" y="138" width="1" height="20" fill="#404040"/><rect x="266" y="159" width="60" height="1" fill="#ffffff"/><rect x="325" y="137" width="1" height="23" fill="#ffffff"/><rect x="267" y="158" width="58" height="1" fill="#d4d0c8"/><rect x="324" y="138" width="1" height="21" fill="#d4d0c8"/><rect x="428" y="137" width="60" height="23" fill="#d4d0c8"/><rect x="428" y="137" width="59" height="1" fill="#808080"/><rect x="428" y="137" width="1" height="22" fill="#808080"/><rect x="429" y="138" width="57" height="1" fill="#404040"/><rect x="429" y="138" width="1" height="20" fill="#404040"/><rect x="428" y="159" width="60" height="1" fill="#ffffff"/><rect x="487" y="137" width="1" height="23" fill="#ffffff"/><rect x="429" y="158" width="58" height="1" fill="#d4d0c8"/><rect x="486" y="138" width="1" height="21" fill="#d4d0c8"/><rect x="96" y="163" width="60" height="23" fill="#d4d0c8"/><rect x="96" y="163" width="59" height="1" fill="#808080"/><rect x="96" y="163" width="1" height="22" fill="#808080"/><rect x="97" y="164" width="57" height="1" fill="#404040"/><rect x="97" y="164" width="1" height="20" fill="#404040"/><rect x="96" y="185" width="60" height="1" fill="#ffffff"/><rect x="155" y="163" width="1" height="23" fill="#ffffff"/><rect x="97" y="184" width="58" height="1" fill="#d4d0c8"/><rect x="154" y="164" width="1" height="21" fill="#d4d0c8"/><rect x="266" y="163" width="60" height="23" fill="#d4d0c8"/><rect x="266" y="163" width="59" height="1" fill="#808080"/><rect x="266" y="163" width="1" height="22" fill="#808080"/><rect x="267" y="164" width="57" height="1" fill="#404040"/><rect x="267" y="164" width="1" height="20" fill="#404040"/><rect x="266" y="185" width="60" height="1" fill="#ffffff"/><rect x="325" y="163" width="1" height="23" fill="#ffffff"/><rect x="267" y="184" width="58" height="1" fill="#d4d0c8"/><rect x="324" y="164" width="1" height="21" fill="#d4d0c8"/><rect x="428" y="163" width="60" height="23" fill="#d4d0c8"/><rect x="428" y="163" width="59" height="1" fill="#808080"/><rect x="428" y="163" width="1" height="22" fill="#808080"/><rect x="429" y="164" width="57" height="1" fill="#404040"/><rect x="429" y="164" width="1" height="20" fill="#404040"/><rect x="428" y="185" width="60" height="1" fill="#ffffff"/><rect x="487" y="163" width="1" height="23" fill="#ffffff"/><rect x="429" y="184" width="58" height="1" fill="#d4d0c8"/><rect x="486" y="164" width="1" height="21" fill="#d4d0c8"/><rect x="96" y="189" width="60" height="23" fill="#d4d0c8"/><rect x="96" y="189" width="59" height="1" fill="#808080"/><rect x="96" y="189" width="1" height="22" fill="#808080"/><rect x="97" y="190" width="57" height="1" fill="#404040"/><rect x="97" y="190" width="1" height="20" fill="#404040"/><rect x="96" y="211" width="60" height="1" fill="#ffffff"/><rect x="155" y="189" width="1" height="23" fill="#ffffff"/><rect x="97" y="210" width="58" height="1" fill="#d4d0c8"/><rect x="154" y="190" width="1" height="21" fill="#d4d0c8"/><rect x="266" y="189" width="60" height="23" fill="#d4d0c8"/><rect x="266" y="189" width="59" height="1" fill="#808080"/><rect x="266" y="189" width="1" height="22" fill="#808080"/><rect x="267" y="190" width="57" height="1" fill="#404040"/><rect x="267" y="190" width="1" height="20" fill="#404040"/><rect x="266" y="211" width="60" height="1" fill="#ffffff"/><rect x="325" y="189" width="1" height="23" fill="#ffffff"/><rect x="267" y="210" width="58" height="1" fill="#d4d0c8"/><rect x="324" y="190" width="1" height="21" fill="#d4d0c8"/><rect x="428" y="189" width="60" height="23" fill="#d4d0c8"/><rect x="428" y="189" width="59" height="1" fill="#808080"/><rect x="428" y="189" width="1" height="22" fill="#808080"/><rect x="429" y="190" width="57" height="1" fill="#404040"/><rect x="429" y="190" width="1" height="20" fill="#404040"/><rect x="428" y="211" width="60" height="1" fill="#ffffff"/><rect x="487" y="189" width="1" height="23" fill="#ffffff"/><rect x="429" y="210" width="58" height="1" fill="#d4d0c8"/><rect x="486" y="190" width="1" height="21" fill="#d4d0c8"/><rect x="96" y="215" width="60" height="23" fill="#d4d0c8"/><rect x="96" y="215" width="59" height="1" fill="#808080"/><rect x="96" y="215" width="1" height="22" fill="#808080"/><rect x="97" y="216" width="57" height="1" fill="#404040"/><rect x="97" y="216" width="1" height="20" fill="#404040"/><rect x="96" y="237" width="60" height="1" fill="#ffffff"/><rect x="155" y="215" width="1" height="23" fill="#ffffff"/><rect x="97" y="236" width="58" height="1" fill="#d4d0c8"/><rect x="154" y="216" width="1" height="21" fill="#d4d0c8"/><rect x="266" y="215" width="60" height="23" fill="#d4d0c8"/><rect x="266" y="215" width="59" height="1" fill="#808080"/><rect x="266" y="215" width="1" height="22" fill="#808080"/><rect x="267" y="216" width="57" height="1" fill="#404040"/><rect x="267" y="216" width="1" height="20" fill="#404040"/><rect x="266" y="237" width="60" height="1" fill="#ffffff"/><rect x="325" y="215" width="1" height="23" fill="#ffffff"/><rect x="267" y="236" width="58" height="1" fill="#d4d0c8"/><rect x="324" y="216" width="1" height="21" fill="#d4d0c8"/><rect x="428" y="215" width="60" height="23" fill="#d4d0c8"/><rect x="428" y="215" width="59" height="1" fill="#808080"/><rect x="428" y="215" width="1" height="22" fill="#808080"/><rect x="429" y="216" width="57" height="1" fill="#404040"/><rect x="429" y="216" width="1" height="20" fill="#404040"/><rect x="428" y="237" width="60" height="1" fill="#ffffff"/><rect x="487" y="215" width="1" height="23" fill="#ffffff"/><rect x="429" y="236" width="58" height="1" fill="#d4d0c8"/><rect x="486" y="216" width="1" height="21" fill="#d4d0c8"/><rect x="96" y="277" width="60" height="23" fill="#fff"/><rect x="96" y="277" width="59" height="1" fill="#808080"/><rect x="96" y="277" width="1" height="22" fill="#808080"/><rect x="97" y="278" width="57" height="1" fill="#404040"/><rect x="97" y="278" width="1" height="20" fill="#404040"/><rect x="96" y="299" width="60" height="1" fill="#ffffff"/><rect x="155" y="277" width="1" height="23" fill="#ffffff"/><rect x="97" y="298" width="58" height="1" fill="#d4d0c8"/><rect x="154" y="278" width="1" height="21" fill="#d4d0c8"/><rect x="96" y="303" width="60" height="23" fill="#fff"/><rect x="96" y="303" width="59" height="1" fill="#808080"/><rect x="96" y="303" width="1" height="22" fill="#808080"/><rect x="97" y="304" width="57" height="1" fill="#404040"/><rect x="97" y="304" width="1" height="20" fill="#404040"/><rect x="96" y="325" width="60" height="1" fill="#ffffff"/><rect x="155" y="303" width="1" height="23" fill="#ffffff"/><rect x="97" y="324" width="58" height="1" fill="#d4d0c8"/><rect x="154" y="304" width="1" height="21" fill="#d4d0c8"/><rect x="96" y="327" width="60" height="23" fill="#fff"/><rect x="96" y="327" width="59" height="1" fill="#808080"/><rect x="96" y="327" width="1" height="22" fill="#808080"/><rect x="97" y="328" width="57" height="1" fill="#404040"/><rect x="97" y="328" width="1" height="20" fill="#404040"/><rect x="96" y="349" width="60" height="1" fill="#ffffff"/><rect x="155" y="327" width="1" height="23" fill="#ffffff"/><rect x="97" y="348" width="58" height="1" fill="#d4d0c8"/><rect x="154" y="328" width="1" height="21" fill="#d4d0c8"/><rect x="96" y="355" width="60" height="23" fill="#fff"/><rect x="96" y="355" width="59" height="1" fill="#808080"/><rect x="96" y="355" width="1" height="22" fill="#808080"/><rect x="97" y="356" width="57" height="1" fill="#404040"/><rect x="97" y="356" width="1" height="20" fill="#404040"/><rect x="96" y="377" width="60" height="1" fill="#ffffff"/><rect x="155" y="355" width="1" height="23" fill="#ffffff"/><rect x="97" y="376" width="58" height="1" fill="#d4d0c8"/><rect x="154" y="356" width="1" height="21" fill="#d4d0c8"/><rect x="330" y="274" width="161" height="23" fill="#fff"/><rect x="330" y="274" width="160" height="1" fill="#808080"/><rect x="330" y="274" width="1" height="22" fill="#808080"/><rect x="331" y="275" width="158" height="1" fill="#404040"/><rect x="331" y="275" width="1" height="20" fill="#404040"/><rect x="330" y="296" width="161" height="1" fill="#ffffff"/><rect x="490" y="274" width="1" height="23" fill="#ffffff"/><rect x="331" y="295" width="159" height="1" fill="#d4d0c8"/><rect x="489" y="275" width="1" height="21" fill="#d4d0c8"/><rect x="330" y="300" width="161" height="23" fill="#fff"/><rect x="330" y="300" width="160" height="1" fill="#808080"/><rect x="330" y="300" width="1" height="22" fill="#808080"/><rect x="331" y="301" width="158" height="1" fill="#404040"/><rect x="331" y="301" width="1" height="20" fill="#404040"/><rect x="330" y="322" width="161" height="1" fill="#ffffff"/><rect x="490" y="300" width="1" height="23" fill="#ffffff"/><rect x="331" y="321" width="159" height="1" fill="#d4d0c8"/><rect x="489" y="301" width="1" height="21" fill="#d4d0c8"/><rect x="330" y="326" width="161" height="55" fill="#fff"/><rect x="330" y="326" width="160" height="1" fill="#808080"/><rect x="330" y="326" width="1" height="54" fill="#808080"/><rect x="331" y="327" width="158" height="1" fill="#404040"/><rect x="331" y="327" width="1" height="52" fill="#404040"/><rect x="330" y="380" width="161" height="1" fill="#ffffff"/><rect x="490" y="326" width="1" height="55" fill="#ffffff"/><rect x="331" y="379" width="159" height="1" fill="#d4d0c8"/><rect x="489" y="327" width="1" height="53" fill="#d4d0c8"/><rect x="164" y="309" width="13" height="13" fill="#fff"/><rect x="164" y="309" width="12" height="1" fill="#808080"/><rect x="164" y="309" width="1" height="12" fill="#808080"/><rect x="165" y="310" width="10" height="1" fill="#404040"/><rect x="165" y="310" width="1" height="10" fill="#404040"/><rect x="164" y="321" width="13" height="1" fill="#ffffff"/><rect x="176" y="309" width="1" height="13" fill="#ffffff"/><rect x="165" y="320" width="11" height="1" fill="#d4d0c8"/><rect x="175" y="310" width="1" height="11" fill="#d4d0c8"/><rect x="164" y="279" width="75" height="23" fill="#d4d0c8"/><rect x="164" y="279" width="74" height="1" fill="#ffffff"/><rect x="164" y="279" width="1" height="22" fill="#ffffff"/><rect x="165" y="280" width="72" height="1" fill="#d4d0c8"/><rect x="165" y="280" width="1" height="20" fill="#d4d0c8"/><rect x="164" y="301" width="75" height="1" fill="#404040"/><rect x="238" y="279" width="1" height="23" fill="#404040"/><rect x="165" y="300" width="73" height="1" fill="#808080"/><rect x="237" y="280" width="1" height="21" fill="#808080"/><rect x="164" y="355" width="75" height="23" fill="#000"/><rect x="165" y="356" width="73" height="21" fill="#d4d0c8"/><rect x="165" y="356" width="72" height="1" fill="#ffffff"/><rect x="165" y="356" width="1" height="20" fill="#ffffff"/><rect x="166" y="357" width="70" height="1" fill="#d4d0c8"/><rect x="166" y="357" width="1" height="18" fill="#d4d0c8"/><rect x="165" y="376" width="73" height="1" fill="#404040"/><rect x="237" y="356" width="1" height="21" fill="#404040"/><rect x="166" y="375" width="71" height="1" fill="#808080"/><rect x="236" y="357" width="1" height="19" fill="#808080"/><rect x="17" y="400" width="134" height="23" fill="#d4d0c8"/><rect x="17" y="400" width="133" height="1" fill="#ffffff"/><rect x="17" y="400" width="1" height="22" fill="#ffffff"/><rect x="18" y="401" width="131" height="1" fill="#d4d0c8"/><rect x="18" y="401" width="1" height="20" fill="#d4d0c8"/><rect x="17" y="422" width="134" height="1" fill="#404040"/><rect x="150" y="400" width="1" height="23" fill="#404040"/><rect x="18" y="421" width="132" height="1" fill="#808080"/><rect x="149" y="401" width="1" height="21" fill="#808080"/><rect x="156" y="400" width="65" height="23" fill="#d4d0c8"/><rect x="156" y="400" width="64" height="1" fill="#ffffff"/><rect x="156" y="400" width="1" height="22" fill="#ffffff"/><rect x="157" y="401" width="62" height="1" fill="#d4d0c8"/><rect x="157" y="401" width="1" height="20" fill="#d4d0c8"/><rect x="156" y="422" width="65" height="1" fill="#404040"/><rect x="220" y="400" width="1" height="23" fill="#404040"/><rect x="157" y="421" width="63" height="1" fill="#808080"/><rect x="219" y="401" width="1" height="21" fill="#808080"/><rect x="225" y="400" width="65" height="23" fill="#d4d0c8"/><rect x="225" y="400" width="64" height="1" fill="#ffffff"/><rect x="225" y="400" width="1" height="22" fill="#ffffff"/><rect x="226" y="401" width="62" height="1" fill="#d4d0c8"/><rect x="226" y="401" width="1" height="20" fill="#d4d0c8"/><rect x="225" y="422" width="65" height="1" fill="#404040"/><rect x="289" y="400" width="1" height="23" fill="#404040"/><rect x="226" y="421" width="63" height="1" fill="#808080"/><rect x="288" y="401" width="1" height="21" fill="#808080"/><rect x="296" y="400" width="65" height="23" fill="#d4d0c8"/><rect x="296" y="400" width="64" height="1" fill="#ffffff"/><rect x="296" y="400" width="1" height="22" fill="#ffffff"/><rect x="297" y="401" width="62" height="1" fill="#d4d0c8"/><rect x="297" y="401" width="1" height="20" fill="#d4d0c8"/><rect x="296" y="422" width="65" height="1" fill="#404040"/><rect x="360" y="400" width="1" height="23" fill="#404040"/><rect x="297" y="421" width="63" height="1" fill="#808080"/><rect x="359" y="401" width="1" height="21" fill="#808080"/><rect x="365" y="400" width="65" height="23" fill="#d4d0c8"/><rect x="365" y="400" width="64" height="1" fill="#ffffff"/><rect x="365" y="400" width="1" height="22" fill="#ffffff"/><rect x="366" y="401" width="62" height="1" fill="#d4d0c8"/><rect x="366" y="401" width="1" height="20" fill="#d4d0c8"/><rect x="365" y="422" width="65" height="1" fill="#404040"/><rect x="429" y="400" width="1" height="23" fill="#404040"/><rect x="366" y="421" width="63" height="1" fill="#808080"/><rect x="428" y="401" width="1" height="21" fill="#808080"/><rect x="435" y="400" width="65" height="23" fill="#d4d0c8"/><rect x="435" y="400" width="64" height="1" fill="#ffffff"/><rect x="435" y="400" width="1" height="22" fill="#ffffff"/><rect x="436" y="401" width="62" height="1" fill="#d4d0c8"/><rect x="436" y="401" width="1" height="20" fill="#d4d0c8"/><rect x="435" y="422" width="65" height="1" fill="#404040"/><rect x="499" y="400" width="1" height="23" fill="#404040"/><rect x="436" y="421" width="63" height="1" fill="#808080"/><rect x="498" y="401" width="1" height="21" fill="#808080"/></svg>
<div class="t" style="left:26px;top:8px;color:#fff;font-weight:bold;font-size:12px;line-height:14px;letter-spacing:0px;transform:none">Thiele-Small Parameters</div><div class="t" style="left:24px;top:36px;background:#d4d0c8">&nbsp;Calculated Thiele-Small Parameters&nbsp;</div><div class="t" style="left:23px;top:254px;background:#d4d0c8">&nbsp;Input Parameters&nbsp;</div><div class="t" style="left:260px;top:254px;background:#d4d0c8">&nbsp;Identification&nbsp;</div><div class="t" style="left:27px;top:64px;">fs (Hz)</div><div class="t" style="left:100px;top:62px;">61.91</div><div class="t" style="left:164px;top:62px;">Revc (Ohms)</div><div class="t" style="left:270px;top:61px;">2.56</div><div class="t" style="left:335px;top:62px;">RMS (kg/s)</div><div class="t" style="left:432px;top:61px;">2.62</div><div class="t" style="left:27px;top:90px;">VAS (l)</div><div class="t" style="left:100px;top:88px;">6.07</div><div class="t" style="left:164px;top:88px;">Zmax (Ohms)</div><div class="t" style="left:270px;top:87px;">15.46</div><div class="t" style="left:335px;top:88px;">CMS (N/mm)</div><div class="t" style="left:432px;top:87px;">0.4424</div><div class="t" style="left:27px;top:116px;">QMS</div><div class="t" style="left:100px;top:114px;">2.2215</div><div class="t" style="left:164px;top:114px;">Znom (Ohms)</div><div class="t" style="left:270px;top:113px;">5</div><div class="t" style="left:335px;top:114px;">MMD (g)</div><div class="t" style="left:432px;top:113px;">13.82</div><div class="t" style="left:27px;top:142px;">QES</div><div class="t" style="left:100px;top:140px;">0.4407</div><div class="t" style="left:164px;top:140px;">Bl (t·m)</div><div class="t" style="left:270px;top:140px;">5.81</div><div class="t" style="left:335px;top:140px;">MMS (g)</div><div class="t" style="left:432px;top:140px;">14.94</div><div class="t" style="left:27px;top:168px;">QTS</div><div class="t" style="left:100px;top:166px;">0.3678</div><div class="t" style="left:164px;top:168px;">Levc @ 1kHz (mH)</div><div class="t" style="left:270px;top:166px;">0</div><div class="t" style="left:335px;top:168px;">no (%)</div><div class="t" style="left:432px;top:166px;">0.317</div><div class="t" style="left:27px;top:194px;">SD</div><div class="t" style="left:100px;top:192px;">98.3</div><div class="t" style="left:164px;top:194px;">Levc @ 10kHz (mH)</div><div class="t" style="left:270px;top:192px;">0</div><div class="t" style="left:335px;top:194px;">SPL @ 1W (dB)</div><div class="t" style="left:432px;top:192px;">87.03</div><div class="t" style="left:27px;top:220px;">Xmax (±mm)</div><div class="t" style="left:100px;top:218px;">3</div><div class="t" style="left:164px;top:220px;">Levc average (mH)</div><div class="t" style="left:270px;top:218px;">0.2962</div><div class="t" style="left:335px;top:220px;">SPL @ 2.83V (dB)</div><div class="t" style="left:432px;top:218px;">91.98</div><div class="t" style="left:24px;top:280px;">Revc (Ohms)</div><div class="t" style="left:100px;top:280px;">2.56</div><div class="t" style="left:24px;top:308px;">DD-Dia (cm)</div><div class="t" style="left:100px;top:306px;">12.8</div><div class="t" style="left:24px;top:334px;">Xmax (±mm)</div><div class="t" style="left:100px;top:330px;">3</div><div class="t" style="left:24px;top:361px;">Ma (g)</div><div class="t" style="left:100px;top:358px;">20</div><div class="t" style="left:164px;top:284px;width:75px;text-align:center;letter-spacing:0.1px">Scan Revc</div><div class="t" style="left:182px;top:309px;">Area</div><div class="t" style="left:164px;top:360px;width:75px;text-align:center;letter-spacing:0.1px">Recalc T/S</div><div class="t" style="left:264px;top:277px;">Manufacturer</div><div class="t" style="left:334px;top:277px;">PwA</div><div class="t" style="left:264px;top:303px;">Model</div><div class="t" style="left:334px;top:303px;">GA620-240410</div><div class="t" style="left:264px;top:329px;">Comments</div><div class="t" style="left:334px;top:329px;">Неразмятый</div><div class="t" style="left:17px;top:404px;width:134px;text-align:center;letter-spacing:-0.1px">Insert into driver database</div><div class="t" style="left:156px;top:404px;width:65px;text-align:center;letter-spacing:-0.1px">Print</div><div class="t" style="left:225px;top:404px;width:65px;text-align:center;letter-spacing:-0.1px">Copy</div><div class="t" style="left:296px;top:404px;width:65px;text-align:center;letter-spacing:-0.1px">OK</div><div class="t" style="left:365px;top:404px;width:65px;text-align:center;letter-spacing:-0.1px">Cancel</div><div class="t" style="left:435px;top:404px;width:65px;text-align:center;letter-spacing:-0.1px">Help</div>
</body></html>
